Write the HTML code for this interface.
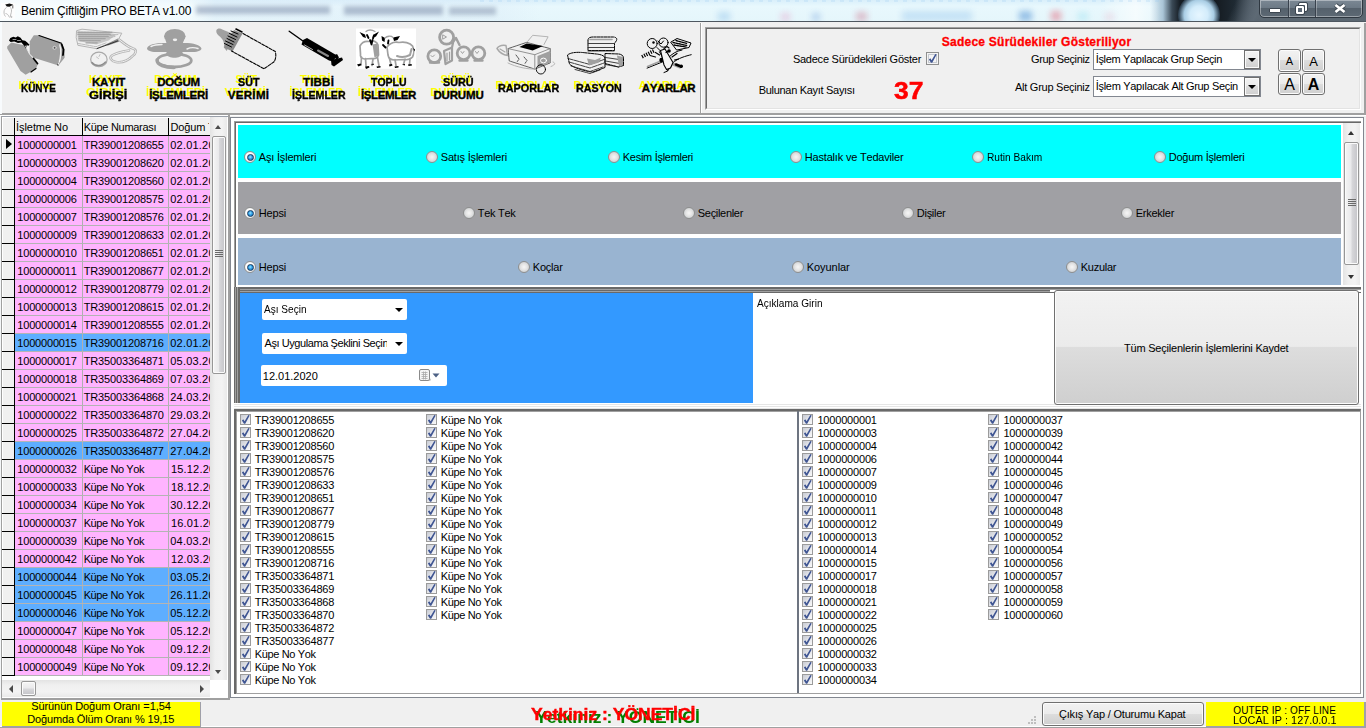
<!DOCTYPE html>
<html lang="tr"><head><meta charset="utf-8"><title>Benim Çiftliğim PRO BETA v1.00</title>
<style>
html,body{margin:0;padding:0;overflow:hidden;width:1366px;height:728px}
body{width:1366px;height:728px;overflow:hidden;position:relative;background:#f0f0f0;font-family:"Liberation Sans","DejaVu Sans",sans-serif;font-size:11px;color:#000}
body div,body span.t,body svg{position:absolute;box-sizing:border-box}
.t{white-space:nowrap;font-kerning:none}
.cb{width:11px;height:11px;border:1px solid #9b9b9b;background:linear-gradient(135deg,#c9ccd4 0%,#e6e7eb 55%,#fafafa 100%)}
.cb::after{content:"";position:absolute;left:0;top:0;width:9px;height:9px;background:#3f5592;clip-path:polygon(0.9px 5.5px,2.3px 4.3px,3.6px 6.3px,7.3px 0px,8.7px 0.5px,4.2px 8.7px,3px 8.7px)}
.cb2{width:13px;height:13px;border:1px solid #8e8f8f;background:#f4f4f4;box-shadow:inset 0 0 0 1px #f4f4f4, inset 0 0 0 2px #c5c9d0}
.cb2::after{content:"";position:absolute;left:1px;top:1px;width:9px;height:9px;background:#3f5592;clip-path:polygon(0.9px 5.5px,2.3px 4.3px,3.6px 6.3px,7.3px 0px,8.7px 0.5px,4.2px 8.7px,3px 8.7px)}
.rb{width:12px;height:12px;border-radius:50%;border:1px solid #8e8f8f;background:radial-gradient(circle at 50% 50%,#f6f6f6 0,#e6e6e6 40%,#bfc3c7 100%)}
.rb.on{background:radial-gradient(circle at 50% 50%,#fff 0,#fff 55%,#d4d6d9 100%)}
.rb.on::after{content:"";position:absolute;box-sizing:border-box;left:1.5px;top:1.5px;width:7px;height:7px;border-radius:50%;border:1.2px solid #163960;background:radial-gradient(circle at 45% 40%,#9fe4ff 0,#2fa0e6 45%,#1b62a8 100%)}
.btn{border:1px solid #707070;border-radius:3px;background:linear-gradient(to bottom,#f2f2f2 0,#ebebeb 49%,#dddddd 50%,#cfcfcf 100%);box-shadow:inset 0 0 0 1px #fcfcfc}
.sbv{background:linear-gradient(to right,#e3e3e3,#f0f0f0 30%,#f3f3f3 70%,#e9e9e9)}
.sbh{background:linear-gradient(to bottom,#e3e3e3,#f0f0f0 30%,#f3f3f3 70%,#e9e9e9)}
.thv{border:1px solid #979797;border-radius:2px;background:linear-gradient(to right,#f5f5f5 0,#e9e9eb 48%,#d8d8db 52%,#c4c4c8 100%);box-shadow:inset 0 0 0 1px #fbfbfb}
.thh{border:1px solid #979797;border-radius:2px;background:linear-gradient(to bottom,#f5f5f5 0,#e9e9eb 48%,#d8d8db 52%,#c4c4c8 100%);box-shadow:inset 0 0 0 1px #fbfbfb}
.cmb{background:#fff;border:1px solid #abadb3;border-top-color:#8e8f8f}
</style></head><body>
<div style="left:0;top:0;width:1366px;height:21px;overflow:hidden;background:linear-gradient(to bottom,#d9effa 0,#e8f8fd 30%,#e5f6fb 100%)"><div style="left:0;top:0;width:1366px;height:21px;background:linear-gradient(to right,rgba(255,255,255,.75) 0,rgba(255,255,255,.5) 190px,rgba(225,236,248,.3) 215px,rgba(215,230,246,.25) 500px,rgba(228,246,251,0) 540px,rgba(228,246,251,0) 1150px,#a9c4d6 1163px,#3b4a57 1172px,#161d24 1180px,#141a20 1215px,#1f2a33 1235px,#46525d 1250px,#5b6771 1262px,#5b6771 1366px)"></div><div style="left:1215px;top:0;width:50px;height:21px;background:linear-gradient(115deg,rgba(20,26,32,0) 0,rgba(20,26,32,0) 35%,rgba(95,107,118,.9) 80%,rgba(95,107,118,0) 100%)"></div><div style="left:1178px;top:-6px;width:42px;height:42px;border-radius:50%;background:radial-gradient(circle at 50% 50%,#e6f6ff 0,#d3ecfb 30%,#a9cde4 50%,rgba(70,100,125,.55) 68%,rgba(20,30,40,0) 82%)"></div><div style="left:1100px;top:0;width:60px;height:21px;background:linear-gradient(to right,rgba(255,255,255,0),rgba(255,255,255,.6) 60%,rgba(255,255,255,0))"></div><div style="left:480px;top:0;width:680px;height:2px;background:repeating-linear-gradient(to right,rgba(150,200,240,.22) 0,rgba(150,200,240,.22) 4px,rgba(255,255,255,0) 4px,rgba(255,255,255,0) 9px)"></div><div style="left:196px;top:6px;width:134px;height:8px;background:rgba(120,135,165,.5);filter:blur(2.2px)"></div><div style="left:344px;top:6px;width:99px;height:9px;background:rgba(120,135,165,.5);filter:blur(2.2px)"></div><div style="left:449px;top:7px;width:47px;height:8px;background:rgba(120,135,165,.45);filter:blur(2.2px)"></div><div style="left:718px;top:12px;width:12px;height:9px;background:rgba(120,180,230,0.36);filter:blur(3px)"></div><div style="left:781px;top:13px;width:9px;height:8px;background:rgba(230,140,190,0.36);filter:blur(3px)"></div><div style="left:812px;top:13px;width:8px;height:8px;background:rgba(100,150,220,0.36);filter:blur(3px)"></div><div style="left:856px;top:12px;width:11px;height:9px;background:rgba(200,90,120,0.36);filter:blur(3px)"></div><div style="left:902px;top:11px;width:70px;height:10px;background:rgba(130,185,235,0.33);filter:blur(3px)"></div><div style="left:1019px;top:11px;width:13px;height:10px;background:rgba(70,140,210,0.51);filter:blur(3px)"></div><div style="left:1051px;top:11px;width:10px;height:10px;background:rgba(225,90,110,0.48);filter:blur(3px)"></div><div style="left:1078px;top:12px;width:10px;height:9px;background:rgba(150,225,240,0.42);filter:blur(3px)"></div><div style="left:1105px;top:13px;width:9px;height:8px;background:rgba(230,170,200,0.30);filter:blur(3px)"></div><div style="left:1259px;top:-1px;width:104px;height:19px;border:1px solid #2f3841;border-radius:0 0 5px 5px;background:linear-gradient(to bottom,#7b8894 0,#6d7a86 45%,#55616c 50%,#5d6974 100%);box-shadow:inset 0 0 0 1px rgba(255,255,255,.38)"></div><div style="left:1288px;top:0;width:1px;height:17px;background:#39424d"></div><div style="left:1289px;top:0;width:1px;height:17px;background:rgba(255,255,255,.3)"></div><div style="left:1315px;top:0;width:1px;height:17px;background:#39424d"></div><div style="left:1316px;top:0;width:1px;height:17px;background:rgba(255,255,255,.3)"></div><div style="left:1269px;top:8px;width:12px;height:5px;background:#fff;border:1px solid #3c4650;border-radius:1px"></div><div style="left:1299px;top:3px;width:8px;height:8px;border:2px solid #fff;outline:1px solid #3c4650;border-radius:1px"></div><div style="left:1296px;top:6px;width:8px;height:8px;border:2px solid #fff;outline:1px solid #3c4650;background:#5d6975;border-radius:1px"></div><svg style="left:1333px;top:3px" width="14" height="11" viewBox="0 0 14 11"><path d="M2.500 2L11.500 9M11.500 2L2.500 9" stroke="#3c4650" stroke-width="4.600"/><path d="M2.500 2L11.500 9M11.500 2L2.500 9" stroke="#fff" stroke-width="2.800"/></svg></div>
<div style="left:0px;top:21px;width:1366px;height:1px;background:#4e5760;"></div>
<svg style="left:1px;top:3px" width="14" height="16" viewBox="0 0 14 16"><rect width="14" height="16" fill="#fdfdfd"/><path d="M4.200 1.600L8.500.600 12.200 1.800 8.500 3.800 5.800 3.600z" fill="#111"/><path d="M11.800 2.200v3.200" stroke="#555" stroke-width=".9"/><path d="M5.500 4.500c-1.500 1-2.500 2.500-2.500 4.500s.5 3.500 1.500 4.500M9.500 4.500c1 1.500 1.200 3 .8 5l-1 3.500 1.700 2M4.500 10.500c1.500 0 3 1.500 4 4" stroke="#bdbdbd" stroke-width="1" fill="none"/><circle cx="10.300" cy="13.800" r="1" fill="#c4c4c4"/></svg>
<span class="t" style="top:2.7px;font-size:12px;line-height:16px;color:#000;letter-spacing:-0.22px;left:21.0px;">Benim Çiftliğim PRO BETA v1.00</span>
<div style="left:0px;top:113px;width:1366px;height:2px;background:#a0a0a0;"></div>
<div style="left:0px;top:115px;width:1366px;height:1px;background:#fff;"></div>
<div style="left:700px;top:23px;width:1px;height:90px;background:#a0a0a0;"></div>
<div style="left:701px;top:23px;width:1px;height:90px;background:#fff;"></div>
<div style="left:0px;top:22px;width:2px;height:92px;background:#f8fbfd;"></div>
<span class="t" style="top:81.3px;font-size:11.5px;line-height:15.5px;color:#000;font-weight:bold;text-shadow:-3px -3px 0 #ffff00;-webkit-text-stroke:0.35px #000;transform:scaleX(0.8643);transform-origin:0 50%;left:21.1px;">KÜNYE</span>
<span class="t" style="top:75.4px;font-size:11.5px;line-height:15.5px;color:#000;font-weight:bold;text-shadow:-3px -3px 0 #ffff00;-webkit-text-stroke:0.35px #000;letter-spacing:-0.30px;left:92.0px;">KAYIT</span>
<span class="t" style="top:88.3px;font-size:11.5px;line-height:15.5px;color:#000;font-weight:bold;text-shadow:-3px -3px 0 #ffff00;-webkit-text-stroke:0.35px #000;transform:scaleX(1.1125);transform-origin:0 50%;left:89.3px;">GİRİŞİ</span>
<span class="t" style="top:75.4px;font-size:11.5px;line-height:15.5px;color:#000;font-weight:bold;text-shadow:-3px -3px 0 #ffff00;-webkit-text-stroke:0.35px #000;letter-spacing:-0.32px;left:157.2px;">DOĞUM</span>
<span class="t" style="top:88.3px;font-size:11.5px;line-height:15.5px;color:#000;font-weight:bold;text-shadow:-3px -3px 0 #ffff00;-webkit-text-stroke:0.35px #000;letter-spacing:-0.30px;left:149.2px;">İŞLEMLERİ</span>
<span class="t" style="top:75.4px;font-size:11.5px;line-height:15.5px;color:#000;font-weight:bold;text-shadow:-3px -3px 0 #ffff00;-webkit-text-stroke:0.35px #000;transform:scaleX(0.9348);transform-origin:0 50%;left:237.8px;">SÜT</span>
<span class="t" style="top:88.3px;font-size:11.5px;line-height:15.5px;color:#000;font-weight:bold;text-shadow:-3px -3px 0 #ffff00;-webkit-text-stroke:0.35px #000;letter-spacing:0.31px;left:227.8px;">VERİMİ</span>
<span class="t" style="top:75.4px;font-size:11.5px;line-height:15.5px;color:#000;font-weight:bold;text-shadow:-3px -3px 0 #ffff00;-webkit-text-stroke:0.35px #000;letter-spacing:0.23px;left:302.9px;">TIBBİ</span>
<span class="t" style="top:88.3px;font-size:11.5px;line-height:15.5px;color:#000;font-weight:bold;text-shadow:-3px -3px 0 #ffff00;-webkit-text-stroke:0.35px #000;transform:scaleX(0.9219);transform-origin:0 50%;left:291.7px;">İŞLEMLER</span>
<span class="t" style="top:75.4px;font-size:11.5px;line-height:15.5px;color:#000;font-weight:bold;text-shadow:-3px -3px 0 #ffff00;-webkit-text-stroke:0.35px #000;transform:scaleX(0.9132);transform-origin:0 50%;left:370.7px;">TOPLU</span>
<span class="t" style="top:88.3px;font-size:11.5px;line-height:15.5px;color:#000;font-weight:bold;text-shadow:-3px -3px 0 #ffff00;-webkit-text-stroke:0.35px #000;letter-spacing:-0.42px;left:361.1px;">İŞLEMLER</span>
<span class="t" style="top:75.4px;font-size:11.5px;line-height:15.5px;color:#000;font-weight:bold;text-shadow:-3px -3px 0 #ffff00;-webkit-text-stroke:0.35px #000;transform:scaleX(0.9419);transform-origin:0 50%;left:443.1px;">SÜRÜ</span>
<span class="t" style="top:88.3px;font-size:11.5px;line-height:15.5px;color:#000;font-weight:bold;text-shadow:-3px -3px 0 #ffff00;-webkit-text-stroke:0.35px #000;letter-spacing:-0.15px;left:433.4px;">DURUMU</span>
<span class="t" style="top:81.3px;font-size:11.5px;line-height:15.5px;color:#000;font-weight:bold;text-shadow:-3px -3px 0 #ffff00;-webkit-text-stroke:0.35px #000;transform:scaleX(0.9391);transform-origin:0 50%;left:497.9px;">RAPORLAR</span>
<span class="t" style="top:81.3px;font-size:11.5px;line-height:15.5px;color:#000;font-weight:bold;text-shadow:-3px -3px 0 #ffff00;-webkit-text-stroke:0.35px #000;transform:scaleX(0.9308);transform-origin:0 50%;left:575.6px;">RASYON</span>
<span class="t" style="top:81.3px;font-size:11.5px;line-height:15.5px;color:#000;font-weight:bold;text-shadow:-3px -3px 0 #ffff00;-webkit-text-stroke:0.35px #000;letter-spacing:-0.39px;left:641.8px;">AYARLAR</span>
<svg style="left:0;top:0" width="700" height="113" viewBox="0 0 700 113" fill="none" stroke-linecap="round" stroke-linejoin="round"><path d="M7.2 46.5L11.3 42.4L25.6 45.5L29.7 54.7L37.9 64L35.9 69.1L25.6 74.7L20.5 71.1L7.2 48.6Z" fill="#a0a0a0"/><path d="M29.7 41.4L33.8 35.3L38.9 35.3L61.5 43L64.6 49.6L64.6 57.8L58.4 65.5L33.8 57.8L29.7 53.7Z" fill="#a0a0a0"/><path d="M10.300 38l3-1.300 2.500.8 2-1.200 2.800 1.500 1.800 2.500 2.700.500 2.200 1.700 2.200 2.300-1.500 1.200-1.200-1.400-.600 4.400-2.200-3.600-2.600-2.800-3.400.300-3.700-1.300-3.700.500-1.600-1.700z" fill="#000"/><path d="M13 39.500h3M17.500 40.500h3" stroke="#ddd" stroke-width=".7"/><path d="M39 35.5L61.500 43.2" stroke="#000" stroke-width="1.2"/><path d="M61.8 44.500L63.5 49.500 63 55" stroke="#000" stroke-width="1.800"/><path d="M59.500 61.500L58 65" stroke="#000" stroke-width="1.2"/><path d="M33.500 58.500L37.500 63.500" stroke="#000" stroke-width="1.800"/><path d="M36 68.500L31 72" stroke="#000" stroke-width="1.200"/><path d="M25.500 46L29.500 54" stroke="#e8e8e8" stroke-width="1"/><path d="M59.800 45c1.500 4 1.500 12-1.200 19" stroke="#f0f0f0" stroke-width="1.400"/><circle cx="54.500" cy="47.800" r="1.600" stroke="#d8d8d8" stroke-width=".8"/><circle cx="54.800" cy="47.800" r=".6" fill="#000"/><path d="M76.900 30.600L82 29.200L121.800 33.200L118.200 39.800L96.300 48.600L77.900 45.300L76.300 38Z" stroke="#b4b4b4" stroke-width="1"/><path d="M77.200 31.200L102.500 32L116.500 34.200L108.600 40.400L96.300 44.500L77.900 41Z" fill="#c6c6c6" stroke="none"/><path d="M78 32.300h34M78 34.400h33M79 36.500h30M79 38.600h27M80 40.700h21M86 42.800h12" stroke="#a4a4a4" stroke-width="1.300" stroke-dasharray="2.200 .8"/><path d="M78.500 43.500l17.500 3.200 10-3.800" stroke="#b4b4b4" stroke-width=".9" stroke-dasharray="3 1"/><path d="M110 35.500l8-1M108 38l7-1.500" stroke="#b4b4b4" stroke-width=".9" stroke-dasharray="2 1"/><path d="M105 45L117.900 38.500L119.500 41.500L108 45.500Z" fill="#8c8c8c"/><path d="M97 48.600L118 40.800" stroke="#333" stroke-width="1"/><ellipse cx="98.900" cy="59.400" rx="8.200" ry="7.200" stroke="#a8a8a8" stroke-width="1.200"/><path d="M92 62.500c3 4 10 4 13.500-.5" stroke="#8c8c8c" stroke-width="1.300"/><path d="M96.500 57l2 1.500M100 54.500l-1 2" stroke="#b4b4b4" stroke-width=".8"/><path d="M119 39.500c4 3 9 7.500 14 9 4 1 3.500 5-1 8-4 4-10 6.500-16 5.500-5-.8-7-4.500-4-6.500 4-2.500 11-4 17-5" stroke="#b4b4b4" stroke-width="2.600"/><path d="M119 39.500c4 3 9 7.500 14 9 4 1 3.500 5-1 8-4 4-10 6.500-16 5.500-5-.8-7-4.500-4-6.500 4-2.500 11-4 17-5" stroke="#f0f0f0" stroke-width="1"/><ellipse cx="174.800" cy="36.300" rx="10.800" ry="7.400" fill="#a0a0a0"/><path d="M165.500 40h18.500l-3 8 2 6c-2 5-15 5-17 0l2-6z" fill="#a0a0a0"/><path d="M147 48.500c1-4 8-5.500 17.500-5.500h20c9 0 16 2 17 5.500-.5 3-7 4-14 3.500h-26c-7 .5-14-.5-14.500-3.500z" fill="#a0a0a0"/><ellipse cx="174.300" cy="60.400" rx="17" ry="6.600" stroke="#a0a0a0" stroke-width="2.800"/><path d="M157 60c0 5 8 7.500 17 7.500" stroke="#a0a0a0" stroke-width="3.400"/><ellipse cx="175" cy="39.800" rx="2.200" ry="1.400" fill="#f0f0f0"/><path d="M151 46.500c3-1.500 7-2 11-2M187 49c3-1.500 8-1.500 11-.5" stroke="#f0f0f0" stroke-width="1.400"/><path d="M216.300 30.500c1-2.500 4-2.500 6-1l8.500 3.500 4-1 -8 19 -3-3.500c1-5-1-8-3.500-10.500-2.500-2-4.500-4-4-6.500z" fill="#a0a0a0"/><path d="M234 30l8.500 3.500-10 18-8.500-4z" fill="#8c8c8c"/><path d="M231 31l7 3M229.500 33.500l7.500 3.500M228 36l7.500 3.500M227 38.500l7 3.500M225.500 41l7.500 3.500M224.500 43.500l7 3.500" stroke="#000" stroke-width="1"/><path d="M236 29l6 3" stroke="#000" stroke-width="1.600"/><path d="M243 33.500L275.300 51.500c1 4 .5 8-1.500 10.500L264 68.800 231.500 51" stroke="#000" stroke-width="1.100" stroke-dasharray="3 1.300"/><path d="M289.200 31.200L304 41.800" stroke="#000" stroke-width="1.400"/><path d="M303 40l4-2 30 17.500-4 6-4-1-27.500-16z" fill="#000"/><path d="M333 56l4-2 2 3.500-2.500 2M331 60l11-2.500 1 2.500-9 6.500-2.500-1.500z" fill="#000"/><path d="M318 50.500l10 5.500" stroke="#888" stroke-width="2"/><path d="M304.500 45l8 4.500" stroke="#ddd" stroke-width=".8"/><rect x="356" y="28.500" width="60" height="40.300" fill="#fff" stroke="none"/><path d="M360 46c2-4 6-5 9-4.500 4-1.500 8 0 9 3.500l.5 10c-1 3-4 4-7 3.500l-7 .5c-3-.5-4.500-2-4-5z" stroke="#a0a0a0" stroke-width="1.700"/><path d="M372.500 44.500l5-1 1 12-4 2z" fill="#a0a0a0"/><path d="M361.500 57l-.5 8M365.500 58.500l.5 7M373 59l-1 6.500M377.500 57.500l1.500 8.500" stroke="#a0a0a0" stroke-width="1.700"/><path d="M359.500 32l5.500 2.500 1 3.500-3-1zM379 31.500l-6 3.500-.5 3 3.500-1.500z" fill="#000"/><path d="M367 35l1.500 3M374 35.500l-1 3M370 40l1.500 4.500 1-4.500" stroke="#000" stroke-width="1.800"/><path d="M366 31.500c2-2 6-2 9 0" stroke="#a0a0a0" stroke-width="1.300"/><path d="M357 64.500l3.500-1 1 1.500-3 1.500zM365 66.500l4-.5.500 1.500-3.500 1.500zM370.500 64.500l3-1 .5 1.500zM376.500 66.500l4-.5v1.500l-3.500.5z" fill="#000"/><path d="M387 47c3-4 8-5.500 12-4.500 5-1 11 0 13.500 3.500 1.500 3 1.500 8 0 11-2 2.500-6 3-9 2.500l-9 .5c-4 0-6-2-6.500-5z" stroke="#a0a0a0" stroke-width="1.700"/><path d="M389.500 58.500l1.500 6M395 59.500l1 6M405 59l-1.500 5.500M410 58.500l-.5 6" stroke="#a0a0a0" stroke-width="1.700"/><path d="M397 56c4 1.500 9 1 13-1l1.500-6" stroke="#a0a0a0" stroke-width="2"/><path d="M393 37.500l7-1.500-2.500 4-3.500 1zM381.500 36l3.500 2-.5 4-2.500-1.500z" fill="#000"/><path d="M383 45l2.500 2.500M388.500 40.500l-.5 3" stroke="#000" stroke-width="1.800"/><path d="M385 38c2-2 6-2.500 8-.5" stroke="#a0a0a0" stroke-width="1.300"/><path d="M389 64.500l3-.5.500 1.500-3 1zM394.500 66.500l4-.5v1.500l-3.500.5zM402 64.500l3-.5v1.500zM408 64.500l3.500-.5.500 1.500-3.500.5zM413 48l2 1.500-.5 2z" fill="#000"/><circle cx="446.600" cy="37.200" r="7" stroke="#a0a0a0" stroke-width="2.800"/><circle cx="434.300" cy="56.300" r="6.400" stroke="#a0a0a0" stroke-width="2.800"/><circle cx="463.600" cy="53.200" r="6.400" stroke="#a0a0a0" stroke-width="2.800"/><circle cx="478.400" cy="53.200" r="6.400" stroke="#a0a0a0" stroke-width="2.800"/><path d="M430 62.500h9M459.500 60.500h8M474.500 60.500h8" stroke="#a0a0a0" stroke-width="2.400"/><path d="M444 51l8-3.500v13l-6.500 3.500zM452 47.500l1.500-7" stroke="#a0a0a0" stroke-width="2.200"/><path d="M447 53v8M449.500 52v8" stroke="#a0a0a0" stroke-width="1.200"/><path d="M452 43l4-5 3.500 7" stroke="#a0a0a0" stroke-width="2.400"/><path d="M443 35l3.500 2-3.500 2zM431 55.500l1.500 1.500 2-2M461 51.500l1.500 2 1.500-2M475.500 51.500l1.500 2 1.500-2" stroke="#a0a0a0" stroke-width="1"/><path d="M508.100 48.600L526.600 42.400L550.200 48.600L550.200 62.900L534.800 69.100L509.200 60.900Z" stroke="#444" stroke-width=".85" stroke-dasharray="4 .8"/><path d="M508.100 48.600L534.800 54.700L550.200 48.600M534.800 54.700V69" stroke="#888" stroke-width=".9"/><path d="M519.400 47.100L526.600 43.500L543 46L532.700 50.600Z" fill="#000"/><path d="M527.600 41.400L532.700 35.300L548.100 36.800L544 44.500" stroke="#b4b4b4" stroke-width="1"/><path d="M537.500 56L550 51V62.500L537.500 67.500Z" fill="#a0a0a0"/><ellipse cx="543.500" cy="60.500" rx="3" ry="2.400" stroke="#fff" stroke-width="1"/><circle cx="540.900" cy="69.400" r="4.600" stroke="#000" stroke-width=".9"/><path d="M497 48.500c2-3 6-3.500 9-3l1.500 10c-4-.5-8-3-10.500-7z" stroke="#a8a8a8" stroke-width="1.500"/><path d="M500 49l5 3" stroke="#a8a8a8" stroke-width="1.200"/><path d="M516 55l3 4-2 3M524 57l3 3.500-2 3" stroke="#555" stroke-width="1" stroke-dasharray="2 1"/><path d="M508 63c8 4 20 6.500 28 6M553 62c3 1 2 3-2 4.500" stroke="#b4b4b4" stroke-width="1"/><path d="M588 40c0-2 2-3 5-3h20c3 0 4.500 1.500 3.500 3.500l-2 3v7H588z" stroke="#000" stroke-width="1" stroke-dasharray="2.500 1"/><path d="M588 43.500h26M588 47.500h26M588 51h26" stroke="#222" stroke-width=".85"/><path d="M590 39.500h22" stroke="#a0a0a0" stroke-width="1.600"/><path d="M567.500 55c3-2.500 9-3 15-2.500l14 1.500c5 .5 8.500 2 8.500 4.500v9l-12 4.500c-5 0-20-4-23.500-8z" stroke="#000" stroke-width="1" stroke-dasharray="2.500 1"/><path d="M568 58.500l22 6 14-5M569 62l21 6 14-5M571 66l19 5.500 13-4.500M575 69.500l15 4 10-3.500" stroke="#222" stroke-width=".85" stroke-dasharray="5 1"/><path d="M587 58.500l8 1.500 6-2.500-2 5-10 3z" fill="#a0a0a0"/><path d="M605 53.500l14 .5c3 .5 4.500 2 4.500 4v7.500l-5 1.500-13.500-3.500z" stroke="#000" stroke-width="1" stroke-dasharray="2.500 1"/><path d="M605.500 57.500l17 2.500M605.500 61l17 3M605.500 64.500l13 2.500" stroke="#222" stroke-width=".85"/><path d="M617 55.500l6 1.500v8l-4 1.500z" fill="#a0a0a0"/><circle cx="652.200" cy="43.500" r="5" stroke="#000" stroke-width="1"/><circle cx="663.500" cy="42.600" r="4.600" stroke="#000" stroke-width="1"/><circle cx="653.500" cy="42.500" r="1.200" fill="#000"/><path d="M658 41l3 3 2.500-3" stroke="#000" stroke-width="1"/><path d="M642 56.800L654.300 50.600" stroke="#000" stroke-width="3.600" stroke-dasharray="1.200 1.200" stroke-linecap="butt"/><path d="M647.100 68.100L662.500 61.900" stroke="#000" stroke-width="1"/><path d="M647.500 66.500L662 60.500" stroke="#a0a0a0" stroke-width="1.600"/><path d="M657 47.500l5 5 9.700 12.500-4.100 6.100-3.600 1.400M659.400 51.700l6 11 2 8" stroke="#000" stroke-width="1"/><circle cx="661.500" cy="60" r="2.200" fill="#000"/><circle cx="669" cy="51" r="1.800" fill="#000"/><path d="M671 42l6-3.500 14 4.500-2 4.500-12 2.500z" stroke="#000" stroke-width="1"/><path d="M673 42.500l14 3M674 45l12 2M676 40.500l11 3" stroke="#000" stroke-width="1.300" stroke-dasharray="2 1"/><path d="M672.700 62.900C678 58 686 56 691.200 54.700M668 58c4-4 8-7 14-8" stroke="#000" stroke-width="1"/><path d="M673 64l7 3" stroke="#a0a0a0" stroke-width="3"/><circle cx="681.300" cy="66.200" r="1.700" fill="#000"/><path d="M660.500 50.500l4.500-1.500 8 13.500-2.500 5.500-4 1.500-2.500-4.500z" fill="#f4f4f4" stroke="#000" stroke-width="1.100"/><path d="M664 48.500l3-2 2 1.500M666 52.500l3.500-2M655.500 52.500l4 2.500M650 55.500l5.500 1.500M672 57l5-3.500M674.500 60l4-1" stroke="#000" stroke-width="1.200"/><path d="M676 64.500l5 2" stroke="#000" stroke-width="2.600"/></svg>
<div style="left:705px;top:27px;width:656px;height:83px;border-style:solid;border-width:1px;border-color:#a0a0a0 #fff #fff #a0a0a0"></div>
<div style="left:706px;top:28px;width:654px;height:81px;border-style:solid;border-width:1px;border-color:#696969 #e3e3e3 #e3e3e3 #696969"></div>
<div style="left:1364px;top:23px;width:2px;height:90px;background:#a0a0a0;"></div>
<span class="t" style="top:34.0px;font-size:12px;line-height:16px;color:#ff0000;font-weight:bold;-webkit-text-stroke:0.3px #f00;letter-spacing:0.24px;left:941.8px;">Sadece Sürüdekiler Gösteriliyor</span>
<span class="t" style="top:51.9px;font-size:11px;line-height:15px;color:#000;letter-spacing:-0.24px;left:792.9px;">Sadece Sürüdekileri Göster</span>
<div class="cb2" style="left:926px;top:52px"></div>
<span class="t" style="top:82.5px;font-size:11px;line-height:15px;color:#000;letter-spacing:-0.30px;left:758.7px;">Bulunan Kayıt Sayısı</span>
<span class="t" style="top:76.9px;font-size:24px;line-height:28px;color:#ff0000;font-weight:bold;-webkit-text-stroke:0.5px #f00;transform:scaleX(1.1010);transform-origin:0 50%;left:894.1px;">37</span>
<span class="t" style="top:52.1px;font-size:11px;line-height:15px;color:#000;letter-spacing:-0.37px;left:1031.1px;">Grup Seçiniz</span>
<span class="t" style="top:80.3px;font-size:11px;line-height:15px;color:#000;letter-spacing:-0.26px;left:1015.0px;">Alt Grup Seçiniz</span>
<div style="left:1093px;top:49px;width:168px;height:21px;background:#fff;border:1px solid #828790"></div>
<div style="left:1244px;top:50px;width:16px;height:19px;border:1px solid #707070;border-radius:0;background:linear-gradient(to bottom,#f2f2f2 0,#ebebeb 49%,#dddddd 50%,#cfcfcf 100%);box-shadow:inset 0 0 0 1px #fafafa"></div>
<div style="left:1248px;top:57.5px;width:0;height:0;border-left:4px solid transparent;border-right:4px solid transparent;border-top:4.500px solid #000"></div>
<span class="t" style="top:51.5px;font-size:11px;line-height:15px;color:#000;letter-spacing:-0.37px;left:1095.8px;">İşlem Yapılacak Grup Seçin</span>
<div style="left:1093px;top:76px;width:168px;height:21px;background:#fff;border:1px solid #828790"></div>
<div style="left:1244px;top:77px;width:16px;height:19px;border:1px solid #707070;border-radius:0;background:linear-gradient(to bottom,#f2f2f2 0,#ebebeb 49%,#dddddd 50%,#cfcfcf 100%);box-shadow:inset 0 0 0 1px #fafafa"></div>
<div style="left:1248px;top:84.5px;width:0;height:0;border-left:4px solid transparent;border-right:4px solid transparent;border-top:4.500px solid #000"></div>
<span class="t" style="top:78.5px;font-size:11px;line-height:15px;color:#000;letter-spacing:-0.32px;left:1095.8px;">İşlem Yapılacak Alt Grup Seçin</span>
<div class="btn" style="left:1278px;top:49px;width:23px;height:23px"></div>
<span class="t" style="top:53.6px;font-size:11px;line-height:15px;color:#000;left:989.5px;width:600px;text-align:center;">A</span>
<div class="btn" style="left:1302px;top:49px;width:23px;height:23px"></div>
<span class="t" style="top:52.6px;font-size:13px;line-height:17px;color:#000;left:1013.5px;width:600px;text-align:center;">A</span>
<div class="btn" style="left:1278px;top:73px;width:23px;height:22px"></div>
<span class="t" style="top:74.6px;font-size:16px;line-height:20px;color:#000;left:989.5px;width:600px;text-align:center;">A</span>
<div class="btn" style="left:1302px;top:73px;width:23px;height:22px"></div>
<span class="t" style="top:74.6px;font-size:16px;line-height:20px;color:#000;font-weight:bold;left:1013.5px;width:600px;text-align:center;">A</span>
<div style="left:2px;top:116px;width:226px;height:1px;background:#9aa0aa;"></div>
<div style="left:2px;top:117px;width:226px;height:581px;background:#fff;"></div>
<div style="left:228px;top:115px;width:2px;height:585px;background:#a0a0a0;"></div>
<div style="left:0px;top:698px;width:230px;height:2px;background:#a0a0a0;"></div>
<div style="left:0px;top:116px;width:1px;height:584px;background:#f4f6f8;"></div>
<div style="left:1px;top:116px;width:1px;height:583px;background:#a0a0a0;"></div>
<div style="left:2px;top:117px;width:208px;height:18px;background:#f0f0f0;"></div>
<div style="left:2px;top:117px;width:208px;height:1px;background:#fff;"></div>
<div style="left:2px;top:117px;width:1px;height:18px;background:#fff;"></div>
<div style="left:2px;top:135px;width:208px;height:1px;background:#000;"></div>
<div style="left:14px;top:118px;width:1px;height:17px;background:#000;"></div>
<div style="left:82px;top:118px;width:1px;height:17px;background:#000;"></div>
<div style="left:168px;top:118px;width:1px;height:17px;background:#000;"></div>
<span class="t" style="top:120.1px;font-size:11px;line-height:15px;color:#000;letter-spacing:-0.06px;left:16.0px;">İşletme No</span>
<span class="t" style="top:120.1px;font-size:11px;line-height:15px;color:#000;letter-spacing:-0.30px;left:83.7px;">Küpe Numarası</span>
<div style="left:169px;top:117px;width:40px;height:18px;overflow:hidden"><span class="t" style="left:1.5px;top:3.1px;line-height:15px;letter-spacing:-0.15px">Doğum Tarihi</span></div>
<div style="left:15px;top:136px;width:195px;height:17px;background:#ffb4ff;"></div>
<div style="left:2px;top:153px;width:208px;height:1px;background:#b4b4b4;"></div>
<div style="left:2px;top:136px;width:12px;height:17px;background:#f0f0f0;"></div>
<div style="left:2px;top:136px;width:1px;height:17px;background:#fff;"></div>
<div style="left:2px;top:153px;width:13px;height:1px;background:#000;"></div>
<div style="left:14px;top:136px;width:1px;height:18px;background:#000;"></div>
<div style="left:82px;top:136px;width:1px;height:17px;background:#b0b0b0;"></div>
<div style="left:168px;top:136px;width:1px;height:17px;background:#b0b0b0;"></div>
<span class="t" style="top:137.6px;font-size:11px;line-height:15px;color:#000;letter-spacing:-0.18px;left:17.3px;">1000000001</span>
<span class="t" style="top:137.6px;font-size:11px;line-height:15px;color:#000;letter-spacing:-0.14px;left:83.7px;">TR39001208655</span>
<div style="left:169px;top:136px;width:41px;height:17px;overflow:hidden"><span class="t" style="left:1.3px;top:1.6px;line-height:15px;letter-spacing:0.2px">02.01.2020</span></div>
<div style="left:15px;top:154px;width:195px;height:17px;background:#ffb4ff;"></div>
<div style="left:2px;top:171px;width:208px;height:1px;background:#b4b4b4;"></div>
<div style="left:2px;top:154px;width:12px;height:17px;background:#f0f0f0;"></div>
<div style="left:2px;top:154px;width:1px;height:17px;background:#fff;"></div>
<div style="left:2px;top:171px;width:13px;height:1px;background:#000;"></div>
<div style="left:14px;top:154px;width:1px;height:18px;background:#000;"></div>
<div style="left:82px;top:154px;width:1px;height:17px;background:#b0b0b0;"></div>
<div style="left:168px;top:154px;width:1px;height:17px;background:#b0b0b0;"></div>
<span class="t" style="top:155.6px;font-size:11px;line-height:15px;color:#000;letter-spacing:-0.18px;left:17.3px;">1000000003</span>
<span class="t" style="top:155.6px;font-size:11px;line-height:15px;color:#000;letter-spacing:-0.14px;left:83.7px;">TR39001208620</span>
<div style="left:169px;top:154px;width:41px;height:17px;overflow:hidden"><span class="t" style="left:1.3px;top:1.6px;line-height:15px;letter-spacing:0.2px">02.01.2020</span></div>
<div style="left:15px;top:172px;width:195px;height:17px;background:#ffb4ff;"></div>
<div style="left:2px;top:189px;width:208px;height:1px;background:#b4b4b4;"></div>
<div style="left:2px;top:172px;width:12px;height:17px;background:#f0f0f0;"></div>
<div style="left:2px;top:172px;width:1px;height:17px;background:#fff;"></div>
<div style="left:2px;top:189px;width:13px;height:1px;background:#000;"></div>
<div style="left:14px;top:172px;width:1px;height:18px;background:#000;"></div>
<div style="left:82px;top:172px;width:1px;height:17px;background:#b0b0b0;"></div>
<div style="left:168px;top:172px;width:1px;height:17px;background:#b0b0b0;"></div>
<span class="t" style="top:173.6px;font-size:11px;line-height:15px;color:#000;letter-spacing:-0.18px;left:17.3px;">1000000004</span>
<span class="t" style="top:173.6px;font-size:11px;line-height:15px;color:#000;letter-spacing:-0.14px;left:83.7px;">TR39001208560</span>
<div style="left:169px;top:172px;width:41px;height:17px;overflow:hidden"><span class="t" style="left:1.3px;top:1.6px;line-height:15px;letter-spacing:0.2px">02.01.2020</span></div>
<div style="left:15px;top:190px;width:195px;height:17px;background:#ffb4ff;"></div>
<div style="left:2px;top:207px;width:208px;height:1px;background:#b4b4b4;"></div>
<div style="left:2px;top:190px;width:12px;height:17px;background:#f0f0f0;"></div>
<div style="left:2px;top:190px;width:1px;height:17px;background:#fff;"></div>
<div style="left:2px;top:207px;width:13px;height:1px;background:#000;"></div>
<div style="left:14px;top:190px;width:1px;height:18px;background:#000;"></div>
<div style="left:82px;top:190px;width:1px;height:17px;background:#b0b0b0;"></div>
<div style="left:168px;top:190px;width:1px;height:17px;background:#b0b0b0;"></div>
<span class="t" style="top:191.6px;font-size:11px;line-height:15px;color:#000;letter-spacing:-0.18px;left:17.3px;">1000000006</span>
<span class="t" style="top:191.6px;font-size:11px;line-height:15px;color:#000;letter-spacing:-0.14px;left:83.7px;">TR39001208575</span>
<div style="left:169px;top:190px;width:41px;height:17px;overflow:hidden"><span class="t" style="left:1.3px;top:1.6px;line-height:15px;letter-spacing:0.2px">02.01.2020</span></div>
<div style="left:15px;top:208px;width:195px;height:17px;background:#ffb4ff;"></div>
<div style="left:2px;top:225px;width:208px;height:1px;background:#b4b4b4;"></div>
<div style="left:2px;top:208px;width:12px;height:17px;background:#f0f0f0;"></div>
<div style="left:2px;top:208px;width:1px;height:17px;background:#fff;"></div>
<div style="left:2px;top:225px;width:13px;height:1px;background:#000;"></div>
<div style="left:14px;top:208px;width:1px;height:18px;background:#000;"></div>
<div style="left:82px;top:208px;width:1px;height:17px;background:#b0b0b0;"></div>
<div style="left:168px;top:208px;width:1px;height:17px;background:#b0b0b0;"></div>
<span class="t" style="top:209.6px;font-size:11px;line-height:15px;color:#000;letter-spacing:-0.18px;left:17.3px;">1000000007</span>
<span class="t" style="top:209.6px;font-size:11px;line-height:15px;color:#000;letter-spacing:-0.14px;left:83.7px;">TR39001208576</span>
<div style="left:169px;top:208px;width:41px;height:17px;overflow:hidden"><span class="t" style="left:1.3px;top:1.6px;line-height:15px;letter-spacing:0.2px">02.01.2020</span></div>
<div style="left:15px;top:226px;width:195px;height:17px;background:#ffb4ff;"></div>
<div style="left:2px;top:243px;width:208px;height:1px;background:#b4b4b4;"></div>
<div style="left:2px;top:226px;width:12px;height:17px;background:#f0f0f0;"></div>
<div style="left:2px;top:226px;width:1px;height:17px;background:#fff;"></div>
<div style="left:2px;top:243px;width:13px;height:1px;background:#000;"></div>
<div style="left:14px;top:226px;width:1px;height:18px;background:#000;"></div>
<div style="left:82px;top:226px;width:1px;height:17px;background:#b0b0b0;"></div>
<div style="left:168px;top:226px;width:1px;height:17px;background:#b0b0b0;"></div>
<span class="t" style="top:227.6px;font-size:11px;line-height:15px;color:#000;letter-spacing:-0.18px;left:17.3px;">1000000009</span>
<span class="t" style="top:227.6px;font-size:11px;line-height:15px;color:#000;letter-spacing:-0.14px;left:83.7px;">TR39001208633</span>
<div style="left:169px;top:226px;width:41px;height:17px;overflow:hidden"><span class="t" style="left:1.3px;top:1.6px;line-height:15px;letter-spacing:0.2px">02.01.2020</span></div>
<div style="left:15px;top:244px;width:195px;height:17px;background:#ffb4ff;"></div>
<div style="left:2px;top:261px;width:208px;height:1px;background:#b4b4b4;"></div>
<div style="left:2px;top:244px;width:12px;height:17px;background:#f0f0f0;"></div>
<div style="left:2px;top:244px;width:1px;height:17px;background:#fff;"></div>
<div style="left:2px;top:261px;width:13px;height:1px;background:#000;"></div>
<div style="left:14px;top:244px;width:1px;height:18px;background:#000;"></div>
<div style="left:82px;top:244px;width:1px;height:17px;background:#b0b0b0;"></div>
<div style="left:168px;top:244px;width:1px;height:17px;background:#b0b0b0;"></div>
<span class="t" style="top:245.6px;font-size:11px;line-height:15px;color:#000;letter-spacing:-0.18px;left:17.3px;">1000000010</span>
<span class="t" style="top:245.6px;font-size:11px;line-height:15px;color:#000;letter-spacing:-0.14px;left:83.7px;">TR39001208651</span>
<div style="left:169px;top:244px;width:41px;height:17px;overflow:hidden"><span class="t" style="left:1.3px;top:1.6px;line-height:15px;letter-spacing:0.2px">02.01.2020</span></div>
<div style="left:15px;top:262px;width:195px;height:17px;background:#ffb4ff;"></div>
<div style="left:2px;top:279px;width:208px;height:1px;background:#b4b4b4;"></div>
<div style="left:2px;top:262px;width:12px;height:17px;background:#f0f0f0;"></div>
<div style="left:2px;top:262px;width:1px;height:17px;background:#fff;"></div>
<div style="left:2px;top:279px;width:13px;height:1px;background:#000;"></div>
<div style="left:14px;top:262px;width:1px;height:18px;background:#000;"></div>
<div style="left:82px;top:262px;width:1px;height:17px;background:#b0b0b0;"></div>
<div style="left:168px;top:262px;width:1px;height:17px;background:#b0b0b0;"></div>
<span class="t" style="top:263.6px;font-size:11px;line-height:15px;color:#000;letter-spacing:-0.18px;left:17.3px;">1000000011</span>
<span class="t" style="top:263.6px;font-size:11px;line-height:15px;color:#000;letter-spacing:-0.14px;left:83.7px;">TR39001208677</span>
<div style="left:169px;top:262px;width:41px;height:17px;overflow:hidden"><span class="t" style="left:1.3px;top:1.6px;line-height:15px;letter-spacing:0.2px">02.01.2020</span></div>
<div style="left:15px;top:280px;width:195px;height:17px;background:#ffb4ff;"></div>
<div style="left:2px;top:297px;width:208px;height:1px;background:#b4b4b4;"></div>
<div style="left:2px;top:280px;width:12px;height:17px;background:#f0f0f0;"></div>
<div style="left:2px;top:280px;width:1px;height:17px;background:#fff;"></div>
<div style="left:2px;top:297px;width:13px;height:1px;background:#000;"></div>
<div style="left:14px;top:280px;width:1px;height:18px;background:#000;"></div>
<div style="left:82px;top:280px;width:1px;height:17px;background:#b0b0b0;"></div>
<div style="left:168px;top:280px;width:1px;height:17px;background:#b0b0b0;"></div>
<span class="t" style="top:281.6px;font-size:11px;line-height:15px;color:#000;letter-spacing:-0.18px;left:17.3px;">1000000012</span>
<span class="t" style="top:281.6px;font-size:11px;line-height:15px;color:#000;letter-spacing:-0.14px;left:83.7px;">TR39001208779</span>
<div style="left:169px;top:280px;width:41px;height:17px;overflow:hidden"><span class="t" style="left:1.3px;top:1.6px;line-height:15px;letter-spacing:0.2px">02.01.2020</span></div>
<div style="left:15px;top:298px;width:195px;height:17px;background:#ffb4ff;"></div>
<div style="left:2px;top:315px;width:208px;height:1px;background:#b4b4b4;"></div>
<div style="left:2px;top:298px;width:12px;height:17px;background:#f0f0f0;"></div>
<div style="left:2px;top:298px;width:1px;height:17px;background:#fff;"></div>
<div style="left:2px;top:315px;width:13px;height:1px;background:#000;"></div>
<div style="left:14px;top:298px;width:1px;height:18px;background:#000;"></div>
<div style="left:82px;top:298px;width:1px;height:17px;background:#b0b0b0;"></div>
<div style="left:168px;top:298px;width:1px;height:17px;background:#b0b0b0;"></div>
<span class="t" style="top:299.6px;font-size:11px;line-height:15px;color:#000;letter-spacing:-0.18px;left:17.3px;">1000000013</span>
<span class="t" style="top:299.6px;font-size:11px;line-height:15px;color:#000;letter-spacing:-0.14px;left:83.7px;">TR39001208615</span>
<div style="left:169px;top:298px;width:41px;height:17px;overflow:hidden"><span class="t" style="left:1.3px;top:1.6px;line-height:15px;letter-spacing:0.2px">02.01.2020</span></div>
<div style="left:15px;top:316px;width:195px;height:17px;background:#ffb4ff;"></div>
<div style="left:2px;top:333px;width:208px;height:1px;background:#b4b4b4;"></div>
<div style="left:2px;top:316px;width:12px;height:17px;background:#f0f0f0;"></div>
<div style="left:2px;top:316px;width:1px;height:17px;background:#fff;"></div>
<div style="left:2px;top:333px;width:13px;height:1px;background:#000;"></div>
<div style="left:14px;top:316px;width:1px;height:18px;background:#000;"></div>
<div style="left:82px;top:316px;width:1px;height:17px;background:#b0b0b0;"></div>
<div style="left:168px;top:316px;width:1px;height:17px;background:#b0b0b0;"></div>
<span class="t" style="top:317.6px;font-size:11px;line-height:15px;color:#000;letter-spacing:-0.18px;left:17.3px;">1000000014</span>
<span class="t" style="top:317.6px;font-size:11px;line-height:15px;color:#000;letter-spacing:-0.14px;left:83.7px;">TR39001208555</span>
<div style="left:169px;top:316px;width:41px;height:17px;overflow:hidden"><span class="t" style="left:1.3px;top:1.6px;line-height:15px;letter-spacing:0.2px">02.01.2020</span></div>
<div style="left:15px;top:334px;width:195px;height:17px;background:#5eaeff;"></div>
<div style="left:2px;top:351px;width:208px;height:1px;background:#b4b4b4;"></div>
<div style="left:2px;top:334px;width:12px;height:17px;background:#f0f0f0;"></div>
<div style="left:2px;top:334px;width:1px;height:17px;background:#fff;"></div>
<div style="left:2px;top:351px;width:13px;height:1px;background:#000;"></div>
<div style="left:14px;top:334px;width:1px;height:18px;background:#000;"></div>
<div style="left:82px;top:334px;width:1px;height:17px;background:#b0b0b0;"></div>
<div style="left:168px;top:334px;width:1px;height:17px;background:#b0b0b0;"></div>
<span class="t" style="top:335.6px;font-size:11px;line-height:15px;color:#000;letter-spacing:-0.18px;left:17.3px;">1000000015</span>
<span class="t" style="top:335.6px;font-size:11px;line-height:15px;color:#000;letter-spacing:-0.14px;left:83.7px;">TR39001208716</span>
<div style="left:169px;top:334px;width:41px;height:17px;overflow:hidden"><span class="t" style="left:1.3px;top:1.6px;line-height:15px;letter-spacing:0.2px">02.01.2020</span></div>
<div style="left:15px;top:352px;width:195px;height:17px;background:#ffb4ff;"></div>
<div style="left:2px;top:369px;width:208px;height:1px;background:#b4b4b4;"></div>
<div style="left:2px;top:352px;width:12px;height:17px;background:#f0f0f0;"></div>
<div style="left:2px;top:352px;width:1px;height:17px;background:#fff;"></div>
<div style="left:2px;top:369px;width:13px;height:1px;background:#000;"></div>
<div style="left:14px;top:352px;width:1px;height:18px;background:#000;"></div>
<div style="left:82px;top:352px;width:1px;height:17px;background:#b0b0b0;"></div>
<div style="left:168px;top:352px;width:1px;height:17px;background:#b0b0b0;"></div>
<span class="t" style="top:353.6px;font-size:11px;line-height:15px;color:#000;letter-spacing:-0.18px;left:17.3px;">1000000017</span>
<span class="t" style="top:353.6px;font-size:11px;line-height:15px;color:#000;letter-spacing:-0.14px;left:83.7px;">TR35003364871</span>
<div style="left:169px;top:352px;width:41px;height:17px;overflow:hidden"><span class="t" style="left:1.3px;top:1.6px;line-height:15px;letter-spacing:0.2px">05.03.2020</span></div>
<div style="left:15px;top:370px;width:195px;height:17px;background:#ffb4ff;"></div>
<div style="left:2px;top:387px;width:208px;height:1px;background:#b4b4b4;"></div>
<div style="left:2px;top:370px;width:12px;height:17px;background:#f0f0f0;"></div>
<div style="left:2px;top:370px;width:1px;height:17px;background:#fff;"></div>
<div style="left:2px;top:387px;width:13px;height:1px;background:#000;"></div>
<div style="left:14px;top:370px;width:1px;height:18px;background:#000;"></div>
<div style="left:82px;top:370px;width:1px;height:17px;background:#b0b0b0;"></div>
<div style="left:168px;top:370px;width:1px;height:17px;background:#b0b0b0;"></div>
<span class="t" style="top:371.6px;font-size:11px;line-height:15px;color:#000;letter-spacing:-0.18px;left:17.3px;">1000000018</span>
<span class="t" style="top:371.6px;font-size:11px;line-height:15px;color:#000;letter-spacing:-0.14px;left:83.7px;">TR35003364869</span>
<div style="left:169px;top:370px;width:41px;height:17px;overflow:hidden"><span class="t" style="left:1.3px;top:1.6px;line-height:15px;letter-spacing:0.2px">07.03.2020</span></div>
<div style="left:15px;top:388px;width:195px;height:17px;background:#ffb4ff;"></div>
<div style="left:2px;top:405px;width:208px;height:1px;background:#b4b4b4;"></div>
<div style="left:2px;top:388px;width:12px;height:17px;background:#f0f0f0;"></div>
<div style="left:2px;top:388px;width:1px;height:17px;background:#fff;"></div>
<div style="left:2px;top:405px;width:13px;height:1px;background:#000;"></div>
<div style="left:14px;top:388px;width:1px;height:18px;background:#000;"></div>
<div style="left:82px;top:388px;width:1px;height:17px;background:#b0b0b0;"></div>
<div style="left:168px;top:388px;width:1px;height:17px;background:#b0b0b0;"></div>
<span class="t" style="top:389.6px;font-size:11px;line-height:15px;color:#000;letter-spacing:-0.18px;left:17.3px;">1000000021</span>
<span class="t" style="top:389.6px;font-size:11px;line-height:15px;color:#000;letter-spacing:-0.14px;left:83.7px;">TR35003364868</span>
<div style="left:169px;top:388px;width:41px;height:17px;overflow:hidden"><span class="t" style="left:1.3px;top:1.6px;line-height:15px;letter-spacing:0.2px">24.03.2020</span></div>
<div style="left:15px;top:406px;width:195px;height:17px;background:#ffb4ff;"></div>
<div style="left:2px;top:423px;width:208px;height:1px;background:#b4b4b4;"></div>
<div style="left:2px;top:406px;width:12px;height:17px;background:#f0f0f0;"></div>
<div style="left:2px;top:406px;width:1px;height:17px;background:#fff;"></div>
<div style="left:2px;top:423px;width:13px;height:1px;background:#000;"></div>
<div style="left:14px;top:406px;width:1px;height:18px;background:#000;"></div>
<div style="left:82px;top:406px;width:1px;height:17px;background:#b0b0b0;"></div>
<div style="left:168px;top:406px;width:1px;height:17px;background:#b0b0b0;"></div>
<span class="t" style="top:407.6px;font-size:11px;line-height:15px;color:#000;letter-spacing:-0.18px;left:17.3px;">1000000022</span>
<span class="t" style="top:407.6px;font-size:11px;line-height:15px;color:#000;letter-spacing:-0.14px;left:83.7px;">TR35003364870</span>
<div style="left:169px;top:406px;width:41px;height:17px;overflow:hidden"><span class="t" style="left:1.3px;top:1.6px;line-height:15px;letter-spacing:0.2px">29.03.2020</span></div>
<div style="left:15px;top:424px;width:195px;height:17px;background:#ffb4ff;"></div>
<div style="left:2px;top:441px;width:208px;height:1px;background:#b4b4b4;"></div>
<div style="left:2px;top:424px;width:12px;height:17px;background:#f0f0f0;"></div>
<div style="left:2px;top:424px;width:1px;height:17px;background:#fff;"></div>
<div style="left:2px;top:441px;width:13px;height:1px;background:#000;"></div>
<div style="left:14px;top:424px;width:1px;height:18px;background:#000;"></div>
<div style="left:82px;top:424px;width:1px;height:17px;background:#b0b0b0;"></div>
<div style="left:168px;top:424px;width:1px;height:17px;background:#b0b0b0;"></div>
<span class="t" style="top:425.6px;font-size:11px;line-height:15px;color:#000;letter-spacing:-0.18px;left:17.3px;">1000000025</span>
<span class="t" style="top:425.6px;font-size:11px;line-height:15px;color:#000;letter-spacing:-0.14px;left:83.7px;">TR35003364872</span>
<div style="left:169px;top:424px;width:41px;height:17px;overflow:hidden"><span class="t" style="left:1.3px;top:1.6px;line-height:15px;letter-spacing:0.2px">27.04.2020</span></div>
<div style="left:15px;top:442px;width:195px;height:17px;background:#5eaeff;"></div>
<div style="left:2px;top:459px;width:208px;height:1px;background:#b4b4b4;"></div>
<div style="left:2px;top:442px;width:12px;height:17px;background:#f0f0f0;"></div>
<div style="left:2px;top:442px;width:1px;height:17px;background:#fff;"></div>
<div style="left:2px;top:459px;width:13px;height:1px;background:#000;"></div>
<div style="left:14px;top:442px;width:1px;height:18px;background:#000;"></div>
<div style="left:82px;top:442px;width:1px;height:17px;background:#b0b0b0;"></div>
<div style="left:168px;top:442px;width:1px;height:17px;background:#b0b0b0;"></div>
<span class="t" style="top:443.6px;font-size:11px;line-height:15px;color:#000;letter-spacing:-0.18px;left:17.3px;">1000000026</span>
<span class="t" style="top:443.6px;font-size:11px;line-height:15px;color:#000;letter-spacing:-0.14px;left:83.7px;">TR35003364877</span>
<div style="left:169px;top:442px;width:41px;height:17px;overflow:hidden"><span class="t" style="left:1.3px;top:1.6px;line-height:15px;letter-spacing:0.2px">27.04.2020</span></div>
<div style="left:15px;top:460px;width:195px;height:17px;background:#ffb4ff;"></div>
<div style="left:2px;top:477px;width:208px;height:1px;background:#b4b4b4;"></div>
<div style="left:2px;top:460px;width:12px;height:17px;background:#f0f0f0;"></div>
<div style="left:2px;top:460px;width:1px;height:17px;background:#fff;"></div>
<div style="left:2px;top:477px;width:13px;height:1px;background:#000;"></div>
<div style="left:14px;top:460px;width:1px;height:18px;background:#000;"></div>
<div style="left:82px;top:460px;width:1px;height:17px;background:#b0b0b0;"></div>
<div style="left:168px;top:460px;width:1px;height:17px;background:#b0b0b0;"></div>
<span class="t" style="top:461.6px;font-size:11px;line-height:15px;color:#000;letter-spacing:-0.18px;left:17.3px;">1000000032</span>
<span class="t" style="top:461.6px;font-size:11px;line-height:15px;color:#000;letter-spacing:-0.40px;left:83.7px;">Küpe No Yok</span>
<div style="left:169px;top:460px;width:41px;height:17px;overflow:hidden"><span class="t" style="left:1.9px;top:1.6px;line-height:15px;letter-spacing:0.2px">15.12.2018</span></div>
<div style="left:15px;top:478px;width:195px;height:17px;background:#ffb4ff;"></div>
<div style="left:2px;top:495px;width:208px;height:1px;background:#b4b4b4;"></div>
<div style="left:2px;top:478px;width:12px;height:17px;background:#f0f0f0;"></div>
<div style="left:2px;top:478px;width:1px;height:17px;background:#fff;"></div>
<div style="left:2px;top:495px;width:13px;height:1px;background:#000;"></div>
<div style="left:14px;top:478px;width:1px;height:18px;background:#000;"></div>
<div style="left:82px;top:478px;width:1px;height:17px;background:#b0b0b0;"></div>
<div style="left:168px;top:478px;width:1px;height:17px;background:#b0b0b0;"></div>
<span class="t" style="top:479.6px;font-size:11px;line-height:15px;color:#000;letter-spacing:-0.18px;left:17.3px;">1000000033</span>
<span class="t" style="top:479.6px;font-size:11px;line-height:15px;color:#000;letter-spacing:-0.40px;left:83.7px;">Küpe No Yok</span>
<div style="left:169px;top:478px;width:41px;height:17px;overflow:hidden"><span class="t" style="left:1.9px;top:1.6px;line-height:15px;letter-spacing:0.2px">18.12.2018</span></div>
<div style="left:15px;top:496px;width:195px;height:17px;background:#ffb4ff;"></div>
<div style="left:2px;top:513px;width:208px;height:1px;background:#b4b4b4;"></div>
<div style="left:2px;top:496px;width:12px;height:17px;background:#f0f0f0;"></div>
<div style="left:2px;top:496px;width:1px;height:17px;background:#fff;"></div>
<div style="left:2px;top:513px;width:13px;height:1px;background:#000;"></div>
<div style="left:14px;top:496px;width:1px;height:18px;background:#000;"></div>
<div style="left:82px;top:496px;width:1px;height:17px;background:#b0b0b0;"></div>
<div style="left:168px;top:496px;width:1px;height:17px;background:#b0b0b0;"></div>
<span class="t" style="top:497.6px;font-size:11px;line-height:15px;color:#000;letter-spacing:-0.18px;left:17.3px;">1000000034</span>
<span class="t" style="top:497.6px;font-size:11px;line-height:15px;color:#000;letter-spacing:-0.40px;left:83.7px;">Küpe No Yok</span>
<div style="left:169px;top:496px;width:41px;height:17px;overflow:hidden"><span class="t" style="left:1.3px;top:1.6px;line-height:15px;letter-spacing:0.2px">30.12.2018</span></div>
<div style="left:15px;top:514px;width:195px;height:17px;background:#ffb4ff;"></div>
<div style="left:2px;top:531px;width:208px;height:1px;background:#b4b4b4;"></div>
<div style="left:2px;top:514px;width:12px;height:17px;background:#f0f0f0;"></div>
<div style="left:2px;top:514px;width:1px;height:17px;background:#fff;"></div>
<div style="left:2px;top:531px;width:13px;height:1px;background:#000;"></div>
<div style="left:14px;top:514px;width:1px;height:18px;background:#000;"></div>
<div style="left:82px;top:514px;width:1px;height:17px;background:#b0b0b0;"></div>
<div style="left:168px;top:514px;width:1px;height:17px;background:#b0b0b0;"></div>
<span class="t" style="top:515.6px;font-size:11px;line-height:15px;color:#000;letter-spacing:-0.18px;left:17.3px;">1000000037</span>
<span class="t" style="top:515.6px;font-size:11px;line-height:15px;color:#000;letter-spacing:-0.40px;left:83.7px;">Küpe No Yok</span>
<div style="left:169px;top:514px;width:41px;height:17px;overflow:hidden"><span class="t" style="left:1.9px;top:1.6px;line-height:15px;letter-spacing:0.2px">16.01.2019</span></div>
<div style="left:15px;top:532px;width:195px;height:17px;background:#ffb4ff;"></div>
<div style="left:2px;top:549px;width:208px;height:1px;background:#b4b4b4;"></div>
<div style="left:2px;top:532px;width:12px;height:17px;background:#f0f0f0;"></div>
<div style="left:2px;top:532px;width:1px;height:17px;background:#fff;"></div>
<div style="left:2px;top:549px;width:13px;height:1px;background:#000;"></div>
<div style="left:14px;top:532px;width:1px;height:18px;background:#000;"></div>
<div style="left:82px;top:532px;width:1px;height:17px;background:#b0b0b0;"></div>
<div style="left:168px;top:532px;width:1px;height:17px;background:#b0b0b0;"></div>
<span class="t" style="top:533.6px;font-size:11px;line-height:15px;color:#000;letter-spacing:-0.18px;left:17.3px;">1000000039</span>
<span class="t" style="top:533.6px;font-size:11px;line-height:15px;color:#000;letter-spacing:-0.40px;left:83.7px;">Küpe No Yok</span>
<div style="left:169px;top:532px;width:41px;height:17px;overflow:hidden"><span class="t" style="left:1.3px;top:1.6px;line-height:15px;letter-spacing:0.2px">04.03.2019</span></div>
<div style="left:15px;top:550px;width:195px;height:17px;background:#ffb4ff;"></div>
<div style="left:2px;top:567px;width:208px;height:1px;background:#b4b4b4;"></div>
<div style="left:2px;top:550px;width:12px;height:17px;background:#f0f0f0;"></div>
<div style="left:2px;top:550px;width:1px;height:17px;background:#fff;"></div>
<div style="left:2px;top:567px;width:13px;height:1px;background:#000;"></div>
<div style="left:14px;top:550px;width:1px;height:18px;background:#000;"></div>
<div style="left:82px;top:550px;width:1px;height:17px;background:#b0b0b0;"></div>
<div style="left:168px;top:550px;width:1px;height:17px;background:#b0b0b0;"></div>
<span class="t" style="top:551.6px;font-size:11px;line-height:15px;color:#000;letter-spacing:-0.18px;left:17.3px;">1000000042</span>
<span class="t" style="top:551.6px;font-size:11px;line-height:15px;color:#000;letter-spacing:-0.40px;left:83.7px;">Küpe No Yok</span>
<div style="left:169px;top:550px;width:41px;height:17px;overflow:hidden"><span class="t" style="left:1.9px;top:1.6px;line-height:15px;letter-spacing:0.2px">12.03.2019</span></div>
<div style="left:15px;top:568px;width:195px;height:17px;background:#5eaeff;"></div>
<div style="left:2px;top:585px;width:208px;height:1px;background:#b4b4b4;"></div>
<div style="left:2px;top:568px;width:12px;height:17px;background:#f0f0f0;"></div>
<div style="left:2px;top:568px;width:1px;height:17px;background:#fff;"></div>
<div style="left:2px;top:585px;width:13px;height:1px;background:#000;"></div>
<div style="left:14px;top:568px;width:1px;height:18px;background:#000;"></div>
<div style="left:82px;top:568px;width:1px;height:17px;background:#b0b0b0;"></div>
<div style="left:168px;top:568px;width:1px;height:17px;background:#b0b0b0;"></div>
<span class="t" style="top:569.6px;font-size:11px;line-height:15px;color:#000;letter-spacing:-0.18px;left:17.3px;">1000000044</span>
<span class="t" style="top:569.6px;font-size:11px;line-height:15px;color:#000;letter-spacing:-0.40px;left:83.7px;">Küpe No Yok</span>
<div style="left:169px;top:568px;width:41px;height:17px;overflow:hidden"><span class="t" style="left:1.3px;top:1.6px;line-height:15px;letter-spacing:0.2px">03.05.2019</span></div>
<div style="left:15px;top:586px;width:195px;height:17px;background:#5eaeff;"></div>
<div style="left:2px;top:603px;width:208px;height:1px;background:#b4b4b4;"></div>
<div style="left:2px;top:586px;width:12px;height:17px;background:#f0f0f0;"></div>
<div style="left:2px;top:586px;width:1px;height:17px;background:#fff;"></div>
<div style="left:2px;top:603px;width:13px;height:1px;background:#000;"></div>
<div style="left:14px;top:586px;width:1px;height:18px;background:#000;"></div>
<div style="left:82px;top:586px;width:1px;height:17px;background:#b0b0b0;"></div>
<div style="left:168px;top:586px;width:1px;height:17px;background:#b0b0b0;"></div>
<span class="t" style="top:587.6px;font-size:11px;line-height:15px;color:#000;letter-spacing:-0.18px;left:17.3px;">1000000045</span>
<span class="t" style="top:587.6px;font-size:11px;line-height:15px;color:#000;letter-spacing:-0.40px;left:83.7px;">Küpe No Yok</span>
<div style="left:169px;top:586px;width:41px;height:17px;overflow:hidden"><span class="t" style="left:1.3px;top:1.6px;line-height:15px;letter-spacing:0.2px">26.11.2019</span></div>
<div style="left:15px;top:604px;width:195px;height:17px;background:#5eaeff;"></div>
<div style="left:2px;top:621px;width:208px;height:1px;background:#b4b4b4;"></div>
<div style="left:2px;top:604px;width:12px;height:17px;background:#f0f0f0;"></div>
<div style="left:2px;top:604px;width:1px;height:17px;background:#fff;"></div>
<div style="left:2px;top:621px;width:13px;height:1px;background:#000;"></div>
<div style="left:14px;top:604px;width:1px;height:18px;background:#000;"></div>
<div style="left:82px;top:604px;width:1px;height:17px;background:#b0b0b0;"></div>
<div style="left:168px;top:604px;width:1px;height:17px;background:#b0b0b0;"></div>
<span class="t" style="top:605.6px;font-size:11px;line-height:15px;color:#000;letter-spacing:-0.18px;left:17.3px;">1000000046</span>
<span class="t" style="top:605.6px;font-size:11px;line-height:15px;color:#000;letter-spacing:-0.40px;left:83.7px;">Küpe No Yok</span>
<div style="left:169px;top:604px;width:41px;height:17px;overflow:hidden"><span class="t" style="left:1.3px;top:1.6px;line-height:15px;letter-spacing:0.2px">05.12.2019</span></div>
<div style="left:15px;top:622px;width:195px;height:17px;background:#ffb4ff;"></div>
<div style="left:2px;top:639px;width:208px;height:1px;background:#b4b4b4;"></div>
<div style="left:2px;top:622px;width:12px;height:17px;background:#f0f0f0;"></div>
<div style="left:2px;top:622px;width:1px;height:17px;background:#fff;"></div>
<div style="left:2px;top:639px;width:13px;height:1px;background:#000;"></div>
<div style="left:14px;top:622px;width:1px;height:18px;background:#000;"></div>
<div style="left:82px;top:622px;width:1px;height:17px;background:#b0b0b0;"></div>
<div style="left:168px;top:622px;width:1px;height:17px;background:#b0b0b0;"></div>
<span class="t" style="top:623.6px;font-size:11px;line-height:15px;color:#000;letter-spacing:-0.18px;left:17.3px;">1000000047</span>
<span class="t" style="top:623.6px;font-size:11px;line-height:15px;color:#000;letter-spacing:-0.40px;left:83.7px;">Küpe No Yok</span>
<div style="left:169px;top:622px;width:41px;height:17px;overflow:hidden"><span class="t" style="left:1.3px;top:1.6px;line-height:15px;letter-spacing:0.2px">05.12.2019</span></div>
<div style="left:15px;top:640px;width:195px;height:17px;background:#ffb4ff;"></div>
<div style="left:2px;top:657px;width:208px;height:1px;background:#b4b4b4;"></div>
<div style="left:2px;top:640px;width:12px;height:17px;background:#f0f0f0;"></div>
<div style="left:2px;top:640px;width:1px;height:17px;background:#fff;"></div>
<div style="left:2px;top:657px;width:13px;height:1px;background:#000;"></div>
<div style="left:14px;top:640px;width:1px;height:18px;background:#000;"></div>
<div style="left:82px;top:640px;width:1px;height:17px;background:#b0b0b0;"></div>
<div style="left:168px;top:640px;width:1px;height:17px;background:#b0b0b0;"></div>
<span class="t" style="top:641.6px;font-size:11px;line-height:15px;color:#000;letter-spacing:-0.18px;left:17.3px;">1000000048</span>
<span class="t" style="top:641.6px;font-size:11px;line-height:15px;color:#000;letter-spacing:-0.40px;left:83.7px;">Küpe No Yok</span>
<div style="left:169px;top:640px;width:41px;height:17px;overflow:hidden"><span class="t" style="left:1.3px;top:1.6px;line-height:15px;letter-spacing:0.2px">09.12.2019</span></div>
<div style="left:15px;top:658px;width:195px;height:17px;background:#ffb4ff;"></div>
<div style="left:2px;top:675px;width:208px;height:1px;background:#b4b4b4;"></div>
<div style="left:2px;top:658px;width:12px;height:17px;background:#f0f0f0;"></div>
<div style="left:2px;top:658px;width:1px;height:17px;background:#fff;"></div>
<div style="left:2px;top:675px;width:13px;height:1px;background:#000;"></div>
<div style="left:14px;top:658px;width:1px;height:18px;background:#000;"></div>
<div style="left:82px;top:658px;width:1px;height:17px;background:#b0b0b0;"></div>
<div style="left:168px;top:658px;width:1px;height:17px;background:#b0b0b0;"></div>
<span class="t" style="top:659.6px;font-size:11px;line-height:15px;color:#000;letter-spacing:-0.18px;left:17.3px;">1000000049</span>
<span class="t" style="top:659.6px;font-size:11px;line-height:15px;color:#000;letter-spacing:-0.40px;left:83.7px;">Küpe No Yok</span>
<div style="left:169px;top:658px;width:41px;height:17px;overflow:hidden"><span class="t" style="left:1.3px;top:1.6px;line-height:15px;letter-spacing:0.2px">09.12.2019</span></div>
<div style="left:5.500px;top:139px;width:0;height:0;border-top:5.500px solid transparent;border-bottom:5.500px solid transparent;border-left:6.500px solid #000"></div>
<div class="sbv" style="left:210px;top:117px;width:17px;height:563px;background:;"></div>
<div style="left:215px;top:125px;width:0;height:0;border-left:3.500px solid transparent;border-right:3.500px solid transparent;border-bottom:4px solid #4a4a4a"></div>
<div style="left:215px;top:670px;width:0;height:0;border-left:3.500px solid transparent;border-right:3.500px solid transparent;border-top:4px solid #4a4a4a"></div>
<div class="thv" style="left:212px;top:136px;width:14px;height:238px"></div>
<div style="left:215px;top:250px;width:8px;height:1px;background:#6a6a6a;"></div>
<div style="left:215px;top:252px;width:8px;height:1px;background:#6a6a6a;"></div>
<div style="left:215px;top:254px;width:8px;height:1px;background:#6a6a6a;"></div>
<div style="left:215px;top:256px;width:8px;height:1px;background:#6a6a6a;"></div>
<div class="sbh" style="left:2px;top:680px;width:208px;height:17px;background:;"></div>
<div style="left:9px;top:684.500px;width:0;height:0;border-top:4px solid transparent;border-bottom:4px solid transparent;border-right:4px solid #4a4a4a"></div>
<div style="left:200px;top:684.500px;width:0;height:0;border-top:4px solid transparent;border-bottom:4px solid transparent;border-left:4px solid #4a4a4a"></div>
<div class="thh" style="left:21px;top:681px;width:15px;height:15px"></div>
<div style="left:230px;top:117px;width:1134px;height:581px;background:#fff;border:1px solid #828790"></div>
<div style="left:234px;top:121px;width:1127px;height:2px;background:#696969;"></div>
<div style="left:234px;top:121px;width:2px;height:166px;background:#696969;"></div>
<div style="left:234px;top:121px;width:1127px;height:1px;background:#a0a0a0;"></div>
<div style="left:234px;top:121px;width:1px;height:166px;background:#a0a0a0;"></div>
<div style="left:238px;top:125px;width:1103px;height:53px;background:#00ffff;"></div>
<div style="left:238px;top:182px;width:1103px;height:52px;background:#a0a0a4;"></div>
<div style="left:238px;top:238px;width:1103px;height:47px;background:#99b4d1;"></div>
<div class="sbv" style="left:1343px;top:123px;width:17px;height:162px;background:;"></div>
<div style="left:1348px;top:131px;width:0;height:0;border-left:3.500px solid transparent;border-right:3.500px solid transparent;border-bottom:4px solid #333"></div>
<div style="left:1348px;top:275px;width:0;height:0;border-left:3.500px solid transparent;border-right:3.500px solid transparent;border-top:4px solid #333"></div>
<div class="thv" style="left:1344px;top:142px;width:15px;height:123px"></div>
<div style="left:1348px;top:199px;width:8px;height:1px;background:#6a6a6a;"></div>
<div style="left:1348px;top:201px;width:8px;height:1px;background:#6a6a6a;"></div>
<div style="left:1348px;top:203px;width:8px;height:1px;background:#6a6a6a;"></div>
<div style="left:1348px;top:205px;width:8px;height:1px;background:#6a6a6a;"></div>
<div class="rb on" style="left:244px;top:151px"></div>
<span class="t" style="top:149.6px;font-size:11px;line-height:15px;color:#000;letter-spacing:-0.19px;left:258.8px;">Aşı İşlemleri</span>
<div class="rb" style="left:426px;top:151px"></div>
<span class="t" style="top:149.6px;font-size:11px;line-height:15px;color:#000;letter-spacing:-0.20px;left:440.8px;">Satış İşlemleri</span>
<div class="rb" style="left:608px;top:151px"></div>
<span class="t" style="top:149.6px;font-size:11px;line-height:15px;color:#000;letter-spacing:-0.29px;left:622.8px;">Kesim İşlemleri</span>
<div class="rb" style="left:790px;top:151px"></div>
<span class="t" style="top:149.6px;font-size:11px;line-height:15px;color:#000;letter-spacing:-0.19px;left:804.8px;">Hastalık ve Tedaviler</span>
<div class="rb" style="left:972px;top:151px"></div>
<span class="t" style="top:149.6px;font-size:11px;line-height:15px;color:#000;transform:scaleX(0.9229);transform-origin:0 50%;left:986.8px;">Rutin Bakım</span>
<div class="rb" style="left:1154px;top:151px"></div>
<span class="t" style="top:149.6px;font-size:11px;line-height:15px;color:#000;letter-spacing:-0.26px;left:1168.8px;">Doğum İşlemleri</span>
<div class="rb on" style="left:244px;top:207px"></div>
<span class="t" style="top:205.6px;font-size:11px;line-height:15px;color:#000;letter-spacing:-0.16px;left:258.8px;">Hepsi</span>
<div class="rb" style="left:463px;top:207px"></div>
<span class="t" style="top:205.6px;font-size:11px;line-height:15px;color:#000;letter-spacing:-0.28px;left:477.8px;">Tek Tek</span>
<div class="rb" style="left:683px;top:207px"></div>
<span class="t" style="top:205.6px;font-size:11px;line-height:15px;color:#000;letter-spacing:-0.31px;left:697.8px;">Seçilenler</span>
<div class="rb" style="left:902px;top:207px"></div>
<span class="t" style="top:205.6px;font-size:11px;line-height:15px;color:#000;letter-spacing:-0.27px;left:916.8px;">Dişiler</span>
<div class="rb" style="left:1121px;top:207px"></div>
<span class="t" style="top:205.6px;font-size:11px;line-height:15px;color:#000;letter-spacing:-0.26px;left:1135.8px;">Erkekler</span>
<div class="rb on" style="left:244px;top:261px"></div>
<span class="t" style="top:259.6px;font-size:11px;line-height:15px;color:#000;letter-spacing:-0.16px;left:258.8px;">Hepsi</span>
<div class="rb" style="left:518px;top:261px"></div>
<span class="t" style="top:259.6px;font-size:11px;line-height:15px;color:#000;letter-spacing:-0.23px;left:532.8px;">Koçlar</span>
<div class="rb" style="left:792px;top:261px"></div>
<span class="t" style="top:259.6px;font-size:11px;line-height:15px;color:#000;letter-spacing:-0.07px;left:806.8px;">Koyunlar</span>
<div class="rb" style="left:1066px;top:261px"></div>
<span class="t" style="top:259.6px;font-size:11px;line-height:15px;color:#000;letter-spacing:-0.27px;left:1080.8px;">Kuzular</span>
<div style="left:234px;top:287px;width:1127px;height:6px;background:repeating-linear-gradient(to bottom,#696969 0,#696969 2px,#a0a0a0 2px,#a0a0a0 3px,#696969 3px,#696969 4px,#a0a0a0 4px,#a0a0a0 5px,#696969 5px,#696969 6px);"></div>
<div style="left:234px;top:287px;width:6px;height:116px;background:linear-gradient(to right,#696969 0,#696969 1px,#a0a0a0 1px,#a0a0a0 2px,#696969 2px,#696969 3px,#a0a0a0 3px,#a0a0a0 4px,#696969 4px,#696969 6px);"></div>
<div style="left:240px;top:293px;width:513px;height:110px;background:#3399ff;"></div>
<div style="left:234px;top:403px;width:1127px;height:6px;background:repeating-linear-gradient(to bottom,#fff 0,#fff 1px,#e6e6e6 1px,#e6e6e6 2px);"></div>
<div style="left:753px;top:293px;width:297px;height:110px;background:#fff;"></div>
<div style="left:1050px;top:290px;width:311px;height:2px;background:#fff;"></div>
<span class="t" style="top:295.9px;font-size:11px;line-height:15px;color:#000;transform:scaleX(0.9157);transform-origin:0 50%;left:757.0px;">Açıklama Girin</span>
<div style="left:262px;top:299px;width:145px;height:21px;background:#fff;border-radius:2px"></div>
<div style="left:394.5px;top:308.0px;width:0;height:0;border-left:4px solid transparent;border-right:4px solid transparent;border-top:4.500px solid #000"></div>
<span class="t" style="top:301.7px;font-size:11px;line-height:15px;color:#000;transform:scaleX(0.9146);transform-origin:0 50%;left:264.3px;">Aşı Seçin</span>
<div style="left:262px;top:333px;width:145px;height:21px;background:#fff;border-radius:2px"></div>
<div style="left:394.5px;top:342.0px;width:0;height:0;border-left:4px solid transparent;border-right:4px solid transparent;border-top:4.500px solid #000"></div>
<div style="left:264px;top:335px;width:123px;height:17px;overflow:hidden"><span class="t" style="left:0.5px;top:0.6px;line-height:15px;letter-spacing:-0.42px">Aşı Uygulama Şeklini Seçin</span></div>
<div style="left:261px;top:365px;width:186px;height:21px;background:#fff;border-radius:2px"></div>
<span class="t" style="top:368.8px;font-size:11px;line-height:15px;color:#000;letter-spacing:-0.01px;left:262.8px;">12.01.2020</span>
<svg style="left:419px;top:369px" width="22" height="14" viewBox="0 0 22 14"><rect x=".5" y=".5" width="10" height="11" rx="1.500" fill="#f4f4f4" stroke="#8a8a8a"/><path d="M2.500 3.500h6M2.500 5.500h6M2.500 7.500h6M2.500 9.500h6M4.500 2.500v8M6.500 2.500v8" stroke="#a8a8a8" stroke-width=".8"/><path d="M9.500 11.500l2-2v2z" fill="#999"/><path d="M13.500 4.500h7l-3.500 4z" fill="#4d6185"/></svg>
<div class="btn" style="left:1054px;top:290px;width:305px;height:115px;background:linear-gradient(to bottom,#f2f2f2 0,#ebebeb 49%,#dddddd 50%,#cfcfcf 100%)"></div>
<span class="t" style="top:341.2px;font-size:11px;line-height:15px;color:#000;letter-spacing:-0.21px;left:1124.0px;">Tüm Seçilenlerin İşlemlerini Kaydet</span>
<div style="left:234px;top:409px;width:1127px;height:285px;background:#fff;border-top:2px solid #696969;border-bottom:1px solid #a0a0a0;border-right:1px solid #a0a0a0"></div>
<div style="left:234px;top:411px;width:1126px;height:1px;background:#a0a0a0;"></div>
<div style="left:234px;top:409px;width:2px;height:285px;background:#696969;"></div>
<div style="left:236px;top:411px;width:1px;height:282px;background:#a0a0a0;"></div>
<div style="left:797px;top:411px;width:2px;height:282px;background:#6d7480;"></div>
<div class="cb" style="left:240px;top:414px"></div>
<span class="t" style="top:413.6px;font-size:11px;line-height:13px;color:#000;letter-spacing:-0.19px;left:254.7px;">TR39001208655</span>
<div class="cb" style="left:240px;top:427px"></div>
<span class="t" style="top:426.6px;font-size:11px;line-height:13px;color:#000;letter-spacing:-0.19px;left:254.7px;">TR39001208620</span>
<div class="cb" style="left:240px;top:440px"></div>
<span class="t" style="top:439.6px;font-size:11px;line-height:13px;color:#000;letter-spacing:-0.19px;left:254.7px;">TR39001208560</span>
<div class="cb" style="left:240px;top:453px"></div>
<span class="t" style="top:452.6px;font-size:11px;line-height:13px;color:#000;letter-spacing:-0.19px;left:254.7px;">TR39001208575</span>
<div class="cb" style="left:240px;top:466px"></div>
<span class="t" style="top:465.6px;font-size:11px;line-height:13px;color:#000;letter-spacing:-0.19px;left:254.7px;">TR39001208576</span>
<div class="cb" style="left:240px;top:479px"></div>
<span class="t" style="top:478.6px;font-size:11px;line-height:13px;color:#000;letter-spacing:-0.19px;left:254.7px;">TR39001208633</span>
<div class="cb" style="left:240px;top:492px"></div>
<span class="t" style="top:491.6px;font-size:11px;line-height:13px;color:#000;letter-spacing:-0.19px;left:254.7px;">TR39001208651</span>
<div class="cb" style="left:240px;top:505px"></div>
<span class="t" style="top:504.6px;font-size:11px;line-height:13px;color:#000;letter-spacing:-0.19px;left:254.7px;">TR39001208677</span>
<div class="cb" style="left:240px;top:518px"></div>
<span class="t" style="top:517.6px;font-size:11px;line-height:13px;color:#000;letter-spacing:-0.19px;left:254.7px;">TR39001208779</span>
<div class="cb" style="left:240px;top:531px"></div>
<span class="t" style="top:530.6px;font-size:11px;line-height:13px;color:#000;letter-spacing:-0.19px;left:254.7px;">TR39001208615</span>
<div class="cb" style="left:240px;top:544px"></div>
<span class="t" style="top:543.6px;font-size:11px;line-height:13px;color:#000;letter-spacing:-0.19px;left:254.7px;">TR39001208555</span>
<div class="cb" style="left:240px;top:557px"></div>
<span class="t" style="top:556.6px;font-size:11px;line-height:13px;color:#000;letter-spacing:-0.19px;left:254.7px;">TR39001208716</span>
<div class="cb" style="left:240px;top:570px"></div>
<span class="t" style="top:569.6px;font-size:11px;line-height:13px;color:#000;letter-spacing:-0.19px;left:254.7px;">TR35003364871</span>
<div class="cb" style="left:240px;top:583px"></div>
<span class="t" style="top:582.6px;font-size:11px;line-height:13px;color:#000;letter-spacing:-0.19px;left:254.7px;">TR35003364869</span>
<div class="cb" style="left:240px;top:596px"></div>
<span class="t" style="top:595.6px;font-size:11px;line-height:13px;color:#000;letter-spacing:-0.19px;left:254.7px;">TR35003364868</span>
<div class="cb" style="left:240px;top:609px"></div>
<span class="t" style="top:608.6px;font-size:11px;line-height:13px;color:#000;letter-spacing:-0.19px;left:254.7px;">TR35003364870</span>
<div class="cb" style="left:240px;top:622px"></div>
<span class="t" style="top:621.6px;font-size:11px;line-height:13px;color:#000;letter-spacing:-0.19px;left:254.7px;">TR35003364872</span>
<div class="cb" style="left:240px;top:635px"></div>
<span class="t" style="top:634.6px;font-size:11px;line-height:13px;color:#000;letter-spacing:-0.19px;left:254.7px;">TR35003364877</span>
<div class="cb" style="left:240px;top:648px"></div>
<span class="t" style="top:647.6px;font-size:11px;line-height:13px;color:#000;letter-spacing:-0.35px;left:254.7px;">Küpe No Yok</span>
<div class="cb" style="left:240px;top:661px"></div>
<span class="t" style="top:660.6px;font-size:11px;line-height:13px;color:#000;letter-spacing:-0.35px;left:254.7px;">Küpe No Yok</span>
<div class="cb" style="left:240px;top:674px"></div>
<span class="t" style="top:673.6px;font-size:11px;line-height:13px;color:#000;letter-spacing:-0.35px;left:254.7px;">Küpe No Yok</span>
<div class="cb" style="left:426px;top:414px"></div>
<span class="t" style="top:413.6px;font-size:11px;line-height:13px;color:#000;letter-spacing:-0.35px;left:440.7px;">Küpe No Yok</span>
<div class="cb" style="left:426px;top:427px"></div>
<span class="t" style="top:426.6px;font-size:11px;line-height:13px;color:#000;letter-spacing:-0.35px;left:440.7px;">Küpe No Yok</span>
<div class="cb" style="left:426px;top:440px"></div>
<span class="t" style="top:439.6px;font-size:11px;line-height:13px;color:#000;letter-spacing:-0.35px;left:440.7px;">Küpe No Yok</span>
<div class="cb" style="left:426px;top:453px"></div>
<span class="t" style="top:452.6px;font-size:11px;line-height:13px;color:#000;letter-spacing:-0.35px;left:440.7px;">Küpe No Yok</span>
<div class="cb" style="left:426px;top:466px"></div>
<span class="t" style="top:465.6px;font-size:11px;line-height:13px;color:#000;letter-spacing:-0.35px;left:440.7px;">Küpe No Yok</span>
<div class="cb" style="left:426px;top:479px"></div>
<span class="t" style="top:478.6px;font-size:11px;line-height:13px;color:#000;letter-spacing:-0.35px;left:440.7px;">Küpe No Yok</span>
<div class="cb" style="left:426px;top:492px"></div>
<span class="t" style="top:491.6px;font-size:11px;line-height:13px;color:#000;letter-spacing:-0.35px;left:440.7px;">Küpe No Yok</span>
<div class="cb" style="left:426px;top:505px"></div>
<span class="t" style="top:504.6px;font-size:11px;line-height:13px;color:#000;letter-spacing:-0.35px;left:440.7px;">Küpe No Yok</span>
<div class="cb" style="left:426px;top:518px"></div>
<span class="t" style="top:517.6px;font-size:11px;line-height:13px;color:#000;letter-spacing:-0.35px;left:440.7px;">Küpe No Yok</span>
<div class="cb" style="left:426px;top:531px"></div>
<span class="t" style="top:530.6px;font-size:11px;line-height:13px;color:#000;letter-spacing:-0.35px;left:440.7px;">Küpe No Yok</span>
<div class="cb" style="left:426px;top:544px"></div>
<span class="t" style="top:543.6px;font-size:11px;line-height:13px;color:#000;letter-spacing:-0.35px;left:440.7px;">Küpe No Yok</span>
<div class="cb" style="left:426px;top:557px"></div>
<span class="t" style="top:556.6px;font-size:11px;line-height:13px;color:#000;letter-spacing:-0.35px;left:440.7px;">Küpe No Yok</span>
<div class="cb" style="left:426px;top:570px"></div>
<span class="t" style="top:569.6px;font-size:11px;line-height:13px;color:#000;letter-spacing:-0.35px;left:440.7px;">Küpe No Yok</span>
<div class="cb" style="left:426px;top:583px"></div>
<span class="t" style="top:582.6px;font-size:11px;line-height:13px;color:#000;letter-spacing:-0.35px;left:440.7px;">Küpe No Yok</span>
<div class="cb" style="left:426px;top:596px"></div>
<span class="t" style="top:595.6px;font-size:11px;line-height:13px;color:#000;letter-spacing:-0.35px;left:440.7px;">Küpe No Yok</span>
<div class="cb" style="left:426px;top:609px"></div>
<span class="t" style="top:608.6px;font-size:11px;line-height:13px;color:#000;letter-spacing:-0.35px;left:440.7px;">Küpe No Yok</span>
<div class="cb" style="left:802px;top:414px"></div>
<span class="t" style="top:413.6px;font-size:11px;line-height:13px;color:#000;letter-spacing:-0.18px;left:817.4px;">1000000001</span>
<div class="cb" style="left:802px;top:427px"></div>
<span class="t" style="top:426.6px;font-size:11px;line-height:13px;color:#000;letter-spacing:-0.18px;left:817.4px;">1000000003</span>
<div class="cb" style="left:802px;top:440px"></div>
<span class="t" style="top:439.6px;font-size:11px;line-height:13px;color:#000;letter-spacing:-0.18px;left:817.4px;">1000000004</span>
<div class="cb" style="left:802px;top:453px"></div>
<span class="t" style="top:452.6px;font-size:11px;line-height:13px;color:#000;letter-spacing:-0.18px;left:817.4px;">1000000006</span>
<div class="cb" style="left:802px;top:466px"></div>
<span class="t" style="top:465.6px;font-size:11px;line-height:13px;color:#000;letter-spacing:-0.18px;left:817.4px;">1000000007</span>
<div class="cb" style="left:802px;top:479px"></div>
<span class="t" style="top:478.6px;font-size:11px;line-height:13px;color:#000;letter-spacing:-0.18px;left:817.4px;">1000000009</span>
<div class="cb" style="left:802px;top:492px"></div>
<span class="t" style="top:491.6px;font-size:11px;line-height:13px;color:#000;letter-spacing:-0.18px;left:817.4px;">1000000010</span>
<div class="cb" style="left:802px;top:505px"></div>
<span class="t" style="top:504.6px;font-size:11px;line-height:13px;color:#000;letter-spacing:-0.18px;left:817.4px;">1000000011</span>
<div class="cb" style="left:802px;top:518px"></div>
<span class="t" style="top:517.6px;font-size:11px;line-height:13px;color:#000;letter-spacing:-0.18px;left:817.4px;">1000000012</span>
<div class="cb" style="left:802px;top:531px"></div>
<span class="t" style="top:530.6px;font-size:11px;line-height:13px;color:#000;letter-spacing:-0.18px;left:817.4px;">1000000013</span>
<div class="cb" style="left:802px;top:544px"></div>
<span class="t" style="top:543.6px;font-size:11px;line-height:13px;color:#000;letter-spacing:-0.18px;left:817.4px;">1000000014</span>
<div class="cb" style="left:802px;top:557px"></div>
<span class="t" style="top:556.6px;font-size:11px;line-height:13px;color:#000;letter-spacing:-0.18px;left:817.4px;">1000000015</span>
<div class="cb" style="left:802px;top:570px"></div>
<span class="t" style="top:569.6px;font-size:11px;line-height:13px;color:#000;letter-spacing:-0.18px;left:817.4px;">1000000017</span>
<div class="cb" style="left:802px;top:583px"></div>
<span class="t" style="top:582.6px;font-size:11px;line-height:13px;color:#000;letter-spacing:-0.18px;left:817.4px;">1000000018</span>
<div class="cb" style="left:802px;top:596px"></div>
<span class="t" style="top:595.6px;font-size:11px;line-height:13px;color:#000;letter-spacing:-0.18px;left:817.4px;">1000000021</span>
<div class="cb" style="left:802px;top:609px"></div>
<span class="t" style="top:608.6px;font-size:11px;line-height:13px;color:#000;letter-spacing:-0.18px;left:817.4px;">1000000022</span>
<div class="cb" style="left:802px;top:622px"></div>
<span class="t" style="top:621.6px;font-size:11px;line-height:13px;color:#000;letter-spacing:-0.18px;left:817.4px;">1000000025</span>
<div class="cb" style="left:802px;top:635px"></div>
<span class="t" style="top:634.6px;font-size:11px;line-height:13px;color:#000;letter-spacing:-0.18px;left:817.4px;">1000000026</span>
<div class="cb" style="left:802px;top:648px"></div>
<span class="t" style="top:647.6px;font-size:11px;line-height:13px;color:#000;letter-spacing:-0.18px;left:817.4px;">1000000032</span>
<div class="cb" style="left:802px;top:661px"></div>
<span class="t" style="top:660.6px;font-size:11px;line-height:13px;color:#000;letter-spacing:-0.18px;left:817.4px;">1000000033</span>
<div class="cb" style="left:802px;top:674px"></div>
<span class="t" style="top:673.6px;font-size:11px;line-height:13px;color:#000;letter-spacing:-0.18px;left:817.4px;">1000000034</span>
<div class="cb" style="left:988px;top:414px"></div>
<span class="t" style="top:413.6px;font-size:11px;line-height:13px;color:#000;letter-spacing:-0.18px;left:1003.4px;">1000000037</span>
<div class="cb" style="left:988px;top:427px"></div>
<span class="t" style="top:426.6px;font-size:11px;line-height:13px;color:#000;letter-spacing:-0.18px;left:1003.4px;">1000000039</span>
<div class="cb" style="left:988px;top:440px"></div>
<span class="t" style="top:439.6px;font-size:11px;line-height:13px;color:#000;letter-spacing:-0.18px;left:1003.4px;">1000000042</span>
<div class="cb" style="left:988px;top:453px"></div>
<span class="t" style="top:452.6px;font-size:11px;line-height:13px;color:#000;letter-spacing:-0.18px;left:1003.4px;">1000000044</span>
<div class="cb" style="left:988px;top:466px"></div>
<span class="t" style="top:465.6px;font-size:11px;line-height:13px;color:#000;letter-spacing:-0.18px;left:1003.4px;">1000000045</span>
<div class="cb" style="left:988px;top:479px"></div>
<span class="t" style="top:478.6px;font-size:11px;line-height:13px;color:#000;letter-spacing:-0.18px;left:1003.4px;">1000000046</span>
<div class="cb" style="left:988px;top:492px"></div>
<span class="t" style="top:491.6px;font-size:11px;line-height:13px;color:#000;letter-spacing:-0.18px;left:1003.4px;">1000000047</span>
<div class="cb" style="left:988px;top:505px"></div>
<span class="t" style="top:504.6px;font-size:11px;line-height:13px;color:#000;letter-spacing:-0.18px;left:1003.4px;">1000000048</span>
<div class="cb" style="left:988px;top:518px"></div>
<span class="t" style="top:517.6px;font-size:11px;line-height:13px;color:#000;letter-spacing:-0.18px;left:1003.4px;">1000000049</span>
<div class="cb" style="left:988px;top:531px"></div>
<span class="t" style="top:530.6px;font-size:11px;line-height:13px;color:#000;letter-spacing:-0.18px;left:1003.4px;">1000000052</span>
<div class="cb" style="left:988px;top:544px"></div>
<span class="t" style="top:543.6px;font-size:11px;line-height:13px;color:#000;letter-spacing:-0.18px;left:1003.4px;">1000000054</span>
<div class="cb" style="left:988px;top:557px"></div>
<span class="t" style="top:556.6px;font-size:11px;line-height:13px;color:#000;letter-spacing:-0.18px;left:1003.4px;">1000000056</span>
<div class="cb" style="left:988px;top:570px"></div>
<span class="t" style="top:569.6px;font-size:11px;line-height:13px;color:#000;letter-spacing:-0.18px;left:1003.4px;">1000000057</span>
<div class="cb" style="left:988px;top:583px"></div>
<span class="t" style="top:582.6px;font-size:11px;line-height:13px;color:#000;letter-spacing:-0.18px;left:1003.4px;">1000000058</span>
<div class="cb" style="left:988px;top:596px"></div>
<span class="t" style="top:595.6px;font-size:11px;line-height:13px;color:#000;letter-spacing:-0.18px;left:1003.4px;">1000000059</span>
<div class="cb" style="left:988px;top:609px"></div>
<span class="t" style="top:608.6px;font-size:11px;line-height:13px;color:#000;letter-spacing:-0.18px;left:1003.4px;">1000000060</span>
<div style="left:0px;top:726px;width:1366px;height:1px;background:#fff;"></div>
<div style="left:0px;top:727px;width:1366px;height:1px;background:#a0a0a0;"></div>
<div style="left:2px;top:702px;width:199px;height:25px;background:#a0a0a8;"></div>
<div style="left:2px;top:702px;width:198px;height:24px;background:#ffff00;"></div>
<span class="t" style="top:699.8px;font-size:11px;line-height:13px;color:#000;letter-spacing:-0.08px;left:31.2px;">Sürünün Doğum Oranı =1,54</span>
<span class="t" style="top:712.7px;font-size:11px;line-height:13px;color:#000;letter-spacing:-0.16px;left:27.3px;">Doğumda Ölüm Oranı % 19,15</span>
<span class="t" style="top:704.8px;font-size:16px;line-height:20px;color:#ff0000;font-weight:bold;text-shadow:4px 3px 0 #008000;-webkit-text-stroke:0.4px #f00;transform:scaleX(1.0942);transform-origin:0 50%;left:531.1px;">Yetkiniz : YÖNETİCİ</span>
<div class="btn" style="left:1042px;top:702px;width:162px;height:24px"></div>
<span class="t" style="top:706.9px;font-size:11px;line-height:15px;color:#000;letter-spacing:-0.20px;left:1059.0px;">Çıkış Yap / Oturumu Kapat</span>
<div style="left:1206px;top:702px;width:160px;height:26px;background:#a0a0a8;"></div>
<div style="left:1206px;top:702px;width:158px;height:24px;background:#ffff00;"></div>
<span class="t" style="top:704.7px;font-size:10px;line-height:11px;color:#000;letter-spacing:0.11px;left:1233.3px;">OUTER IP : OFF LINE</span>
<span class="t" style="top:714.9px;font-size:10px;line-height:11px;color:#000;transform:scaleX(1.0888);transform-origin:0 50%;left:1232.8px;">LOCAL IP : 127.0.0.1</span>
<div style="left:1034px;top:722px;width:2px;height:2px;background:#bfbfbf;"></div>
<div style="left:1031px;top:722px;width:2px;height:2px;background:#bfbfbf;"></div>
<div style="left:1034px;top:719px;width:2px;height:2px;background:#bfbfbf;"></div>
<div style="left:1028px;top:722px;width:2px;height:2px;background:#bfbfbf;"></div>
<div style="left:1031px;top:719px;width:2px;height:2px;background:#bfbfbf;"></div>
<div style="left:1034px;top:716px;width:2px;height:2px;background:#bfbfbf;"></div>
</body></html>
